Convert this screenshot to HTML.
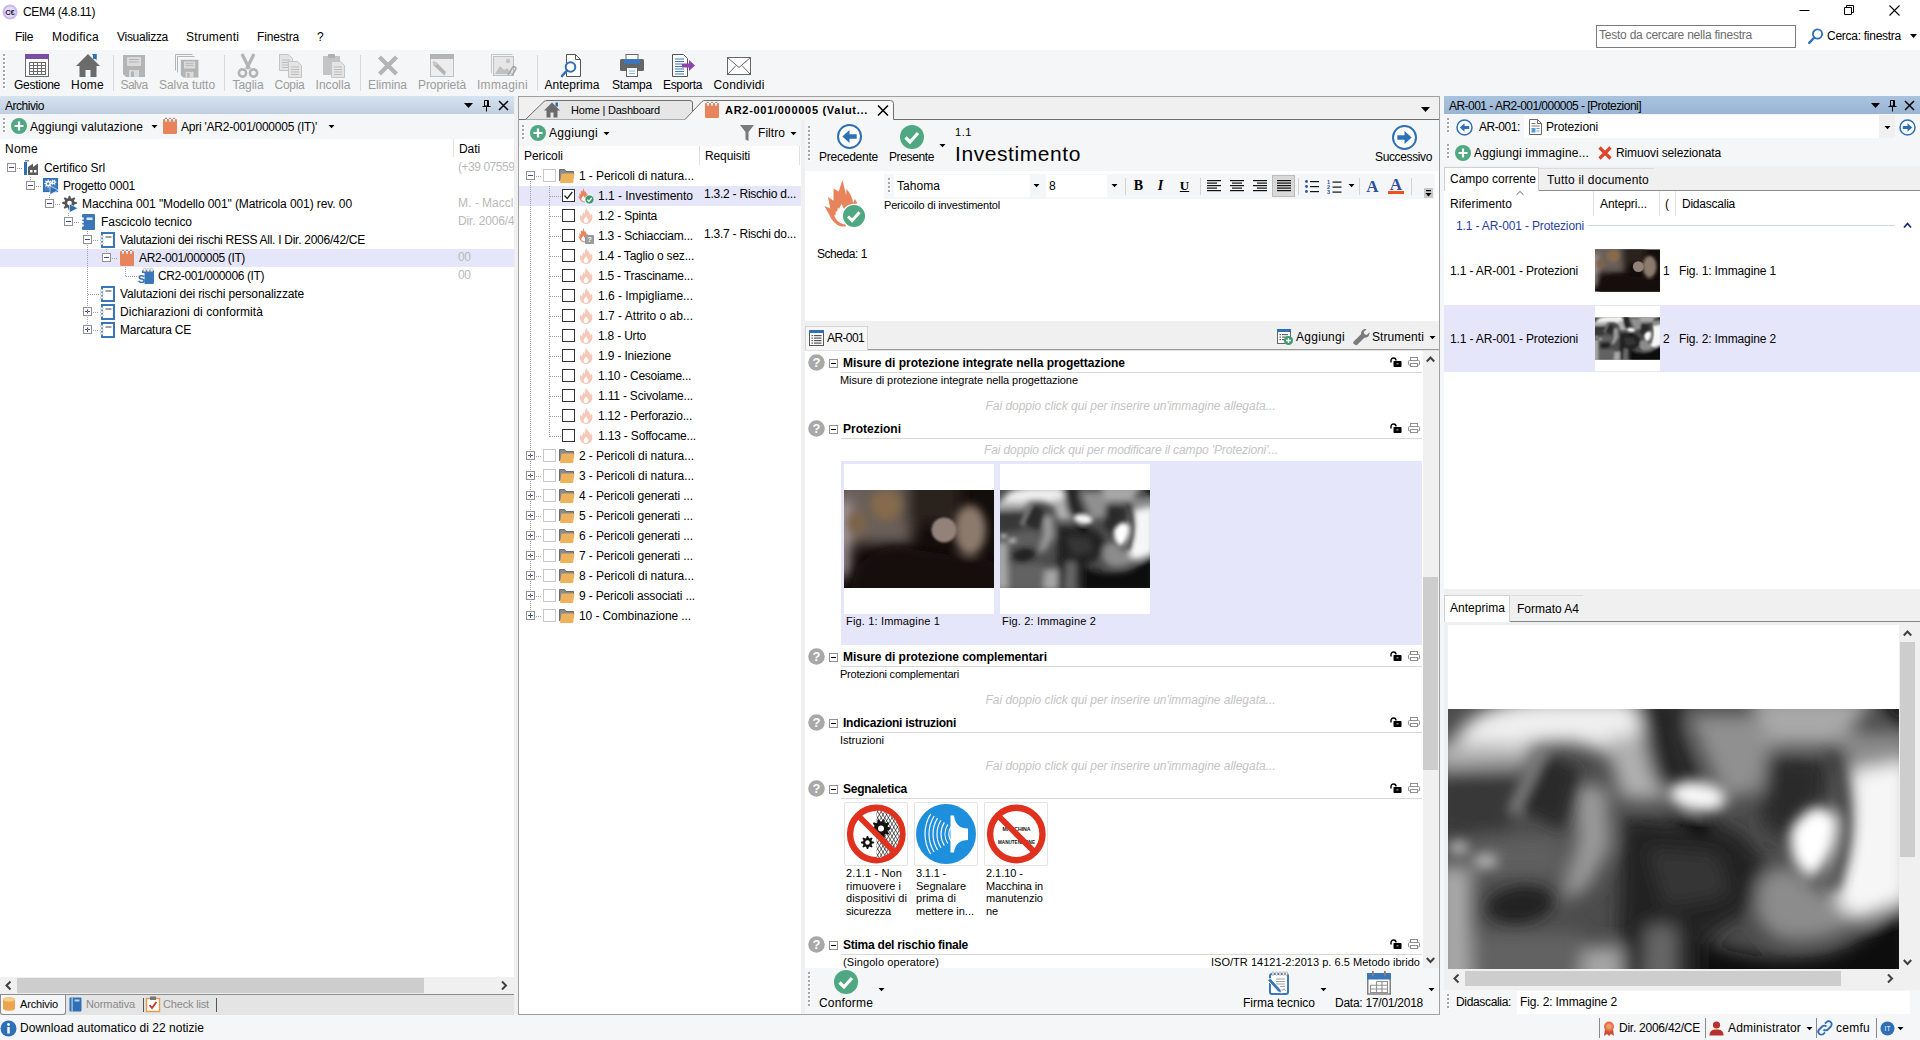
<!DOCTYPE html>
<html><head><meta charset="utf-8"><title>CEM4</title>
<style>
html,body{margin:0;padding:0;}
body{width:1920px;height:1040px;overflow:hidden;position:relative;background:#f5f6f7;font-family:"Liberation Sans",sans-serif;font-size:12px;}
div,span,svg{position:absolute;}
svg{overflow:visible;}
</style></head><body>
<svg width="0" height="0" style="left:0;top:0"><defs>
<filter id="b2" x="-20%" y="-20%" width="140%" height="140%"><feGaussianBlur stdDeviation="2.2"/></filter>
<filter id="b3" x="-30%" y="-30%" width="160%" height="160%"><feGaussianBlur stdDeviation="3"/></filter>
<filter id="b4" x="-30%" y="-30%" width="160%" height="160%"><feGaussianBlur stdDeviation="4"/></filter>
<filter id="b1" x="-20%" y="-20%" width="140%" height="140%"><feGaussianBlur stdDeviation="1.1"/></filter>
<filter id="b7" x="-40%" y="-40%" width="180%" height="180%"><feGaussianBlur stdDeviation="7"/></filter>
<clipPath id="c150"><rect x="0" y="0" width="150" height="98"/></clipPath>
<g id="img1" clip-path="url(#c150)">
 <rect width="150" height="98" fill="#130d0b"/>
 <g filter="url(#b7)">
  <rect x="-10" y="-12" width="78" height="66" fill="#6a5e59"/>
  <rect x="-10" y="12" width="15" height="74" fill="#b3a5a5"/>
  <rect x="62" y="-10" width="55" height="44" fill="#2c221c"/>
 </g>
 <g filter="url(#b4)">
  <ellipse cx="42" cy="15" rx="15" ry="15" fill="#866a4c"/>
  <ellipse cx="13" cy="33" rx="10" ry="11" fill="#7a634a"/>
  <ellipse cx="126" cy="40" rx="16" ry="25" fill="#8c7a6d"/>
  <path d="M6 104L14 76Q40 50 72 60L156 72V104z" fill="#130d0b"/>
 </g>
 <circle cx="100" cy="40" r="12.500" fill="#93827a" filter="url(#b1)"/>
</g>
<g id="img2" clip-path="url(#c150)">
 <rect width="150" height="98" fill="#4c4c4c"/>
 <g filter="url(#b3)">
  <!-- top-left white band arc -->
  <path d="M2 11Q8 -3 35 -3H60Q68 6 71 26L60 22Q55 13 40 11L5 13z" fill="#efefef"/>
  <path d="M52 10L66 8L74 30L58 30z" fill="#b0b0b0"/>
  <!-- left gray band and dark below -->
  <path d="M-4 11L28 12L27 19L-4 20z" fill="#b4b4b4"/>
  <path d="M-4 21H24L20 42H-4z" fill="#383838"/>
  <!-- dark top center diagonal -->
  <path d="M62 -4H80L78 8L90 38L82 42L68 22z" fill="#282828"/>
  <!-- right of it gray -->
  <path d="M80 2H108L108 26L92 30z" fill="#909090"/>
  <path d="M100 -4H142L130 12L108 12z" fill="#a8a8a8"/>
  <path d="M130 8H154V24H134z" fill="#8c8c8c"/>
  <!-- dark vertical right -->
  <path d="M106 15L126 17L125 30L114 44L104 38z" fill="#2a2a2a"/>
  <!-- center dark mass -->
  <path d="M58 36L96 40L108 54L104 64L86 76L86 100H56z" fill="#222222"/>
  <path d="M66 46L90 48L94 62L72 66z" fill="#363636"/>
  <!-- light curve stripe -->
  <path d="M42 25L53 26L54 46L46 60L37 64L43 44z" fill="#9a9a9a"/>
  <!-- left mid -->
  <path d="M8 42H38V56H10z" fill="#5e5e5e"/>
  <path d="M-4 52H8V100H-4z" fill="#a8a8a8"/>
  <path d="M10 74H44V100H8z" fill="#626262"/>
  <path d="M45 79H58V100H43z" fill="#a6a6a6"/>
  <path d="M66 72H76V100H64z" fill="#686868"/>
  <!-- gray swoosh lower right -->
  <path d="M104 56Q112 50 118 55Q124 62 131 64L137 70Q124 79 110 76Q99 70 104 56z" fill="#8c8c8c"/>
  <!-- bottom right dark -->
  <path d="M84 77Q106 86 128 81Q142 75 154 60V102H84z" fill="#0e0e0e"/>
  <path d="M133 21L154 17V63L138 70Q126 66 129 56Q135 44 133 21z" fill="#f6f6f6"/>
 </g>
 <g filter="url(#b2)">
  <path d="M31 13L33.500 14L23 35L20.500 34z" fill="#a8a8a8"/>
  <path d="M32 15L44 20L38 40L23 33z" fill="#2c2c2c"/>
  <ellipse cx="24" cy="65" rx="11" ry="6" fill="#222" transform="rotate(-8 24 65)"/>
  <ellipse cx="83" cy="29" rx="9.500" ry="5" fill="#f6f6f6" transform="rotate(8 83 29)"/>
  <path d="M77 34L87 39.500L85.500 41.500L76 36.500z" fill="#060606"/>
  <path d="M114 40Q122 28 129 36Q130 48 121 56Q113 52 114 40z" fill="#ffffff"/>
  <path d="M127 15Q136 36 128 60" fill="none" stroke="#3a3a3a" stroke-width="3.500"/>
  <path d="M143 -3H152V6z" fill="#0c0c0c"/>
  <ellipse cx="3.500" cy="46" rx="3.500" ry="2" fill="#cfcfcf"/>
  <ellipse cx="12.500" cy="50.500" rx="4" ry="2" fill="#cfcfcf"/>
 </g>
</g>
</defs></svg>
<div style="left:0px;top:0px;width:1920px;height:50px;background:#fff;"></div>
<svg style="left:2px;top:4px;" width="16" height="16" viewBox="0 0 16 16"><circle cx="8" cy="8" r="7.5" fill="#c9b8ec"/><circle cx="8" cy="8" r="5.5" fill="#e2d9f5"/><text x="8" y="11" font-size="7.5" font-weight="700" text-anchor="middle" fill="#2a2440" font-family="Liberation Sans">C€</text></svg>
<span id="t1" style="top:4.0px;font-size:12px;line-height:16px;color:#000;white-space:nowrap;letter-spacing:-0.395px;left:23px;">CEM4 (4.8.11)</span>
<svg style="left:1794px;top:0px;" width="120" height="24" viewBox="0 0 120 24"><path d="M5.5 10.5h10" stroke="#000" stroke-width="1" fill="none"/><path d="M50.5 7.5h7v7h-7z M52.5 7.5v-2h7v7h-2" stroke="#000" stroke-width="1" fill="none"/><path d="M95.5 5.5l10 10M105.5 5.5l-10 10" stroke="#000" stroke-width="1.1" fill="none"/></svg>
<span id="t2" style="top:29.0px;font-size:12px;line-height:16px;color:#000;white-space:nowrap;letter-spacing:-0.336px;left:15px;">File</span>
<span id="t3" style="top:29.0px;font-size:12px;line-height:16px;color:#000;white-space:nowrap;letter-spacing:0.289px;left:52px;">Modifica</span>
<span id="t4" style="top:29.0px;font-size:12px;line-height:16px;color:#000;white-space:nowrap;letter-spacing:-0.281px;left:117px;">Visualizza</span>
<span id="t5" style="top:29.0px;font-size:12px;line-height:16px;color:#000;white-space:nowrap;letter-spacing:0.182px;left:186px;">Strumenti</span>
<span id="t6" style="top:29.0px;font-size:12px;line-height:16px;color:#000;white-space:nowrap;letter-spacing:-0.170px;left:257px;">Finestra</span>
<span id="t7" style="top:29.0px;font-size:12px;line-height:16px;color:#000;white-space:nowrap;letter-spacing:-0.688px;left:317px;">?</span>
<div style="left:1596px;top:25px;width:200px;height:23px;background:#fff;border:1px solid #7a7a7a;box-sizing:border-box;"></div>
<span id="t8" style="top:27.0px;font-size:12px;line-height:16px;color:#6d6d6d;white-space:nowrap;letter-spacing:-0.229px;left:1599px;">Testo da cercare nella finestra</span>
<svg style="left:1807px;top:27px;" width="18" height="18" viewBox="0 0 18 18"><circle cx="10.5" cy="7" r="4.6" fill="none" stroke="#2f6fb5" stroke-width="1.8"/><path d="M7.3 10.5L2.2 15.8" stroke="#2f6fb5" stroke-width="2.4" stroke-linecap="round"/></svg>
<span id="t9" style="top:28.0px;font-size:12px;line-height:16px;color:#000;white-space:nowrap;letter-spacing:-0.269px;left:1827px;">Cerca: finestra</span>
<svg style="left:1910px;top:34px;" width="8" height="5" viewBox="0 0 8 5"><path d="M0 0h7l-3.5 4z" fill="#000"/></svg>
<div style="left:0px;top:50px;width:1920px;height:46px;background:#f5f6f7;"></div>
<svg style="left:3px;top:54px;" width="3" height="38" viewBox="0 0 3 38"><rect x="1" y="1" width="2" height="2" fill="#fff"/><rect x="0" y="0" width="2" height="2" fill="#a6a6a6"/><rect x="1" y="5" width="2" height="2" fill="#fff"/><rect x="0" y="4" width="2" height="2" fill="#a6a6a6"/><rect x="1" y="9" width="2" height="2" fill="#fff"/><rect x="0" y="8" width="2" height="2" fill="#a6a6a6"/><rect x="1" y="13" width="2" height="2" fill="#fff"/><rect x="0" y="12" width="2" height="2" fill="#a6a6a6"/><rect x="1" y="17" width="2" height="2" fill="#fff"/><rect x="0" y="16" width="2" height="2" fill="#a6a6a6"/><rect x="1" y="21" width="2" height="2" fill="#fff"/><rect x="0" y="20" width="2" height="2" fill="#a6a6a6"/><rect x="1" y="25" width="2" height="2" fill="#fff"/><rect x="0" y="24" width="2" height="2" fill="#a6a6a6"/><rect x="1" y="29" width="2" height="2" fill="#fff"/><rect x="0" y="28" width="2" height="2" fill="#a6a6a6"/><rect x="1" y="33" width="2" height="2" fill="#fff"/><rect x="0" y="32" width="2" height="2" fill="#a6a6a6"/></svg>
<svg style="left:25px;top:54px;" width="24" height="24" viewBox="0 0 24 24"><rect x="0.5" y="0.5" width="23" height="22" fill="#fff" stroke="#6a6a6a"/><rect x="0" y="0" width="24" height="5" fill="#7b4ea3"/><path d="M4.5 8v12" stroke="#6a6a6a"/><path d="M8.5 8v12" stroke="#6a6a6a"/><path d="M12.5 8v12" stroke="#6a6a6a"/><path d="M16.5 8v12" stroke="#6a6a6a"/><path d="M20.5 8v12" stroke="#6a6a6a"/><path d="M4 8.5h17" stroke="#6a6a6a"/><path d="M4 11.5h17" stroke="#6a6a6a"/><path d="M4 14.5h17" stroke="#6a6a6a"/><path d="M4 17.5h17" stroke="#6a6a6a"/><path d="M4 20.5h17" stroke="#6a6a6a"/></svg>
<span id="t10" style="top:77.0px;font-size:12px;line-height:16px;color:#000;white-space:nowrap;letter-spacing:-0.254px;left:14.00px;">Gestione</span>
<svg style="left:75.5px;top:54px;" width="24" height="24" viewBox="0 0 24 24"><path d="M12 0L0 12h3.5v11h6v-7h5v7h6V12H24z" fill="#6b6b6b"/><path d="M16 0h4.5v6.5z" fill="#2f6fb5"/><rect x="17" y="0" width="3.5" height="5" fill="#2f6fb5"/></svg>
<span id="t11" style="top:77.0px;font-size:12px;line-height:16px;color:#000;white-space:nowrap;letter-spacing:0.246px;left:71.00px;">Home</span>
<div style="left:113px;top:55px;width:1px;height:36px;background:#d9d9d9;"></div>
<svg style="left:122px;top:54px;" width="24" height="24" viewBox="0 0 24 24"><path d="M1 1h22v22H4l-3-3z" fill="#b4b4b4"/><rect x="5" y="3" width="14" height="9" fill="#dadada"/><path d="M7 5.5h10M7 8h10" stroke="#b4b4b4"/><rect x="7" y="16" width="10" height="7" fill="#dadada"/><rect x="9" y="17.5" width="3" height="5.5" fill="#b4b4b4"/></svg>
<span id="t12" style="top:77.0px;font-size:12px;line-height:16px;color:#9c9c9c;white-space:nowrap;letter-spacing:-0.606px;left:120.50px;">Salva</span>
<svg style="left:175px;top:54px;" width="24" height="24" viewBox="0 0 24 24"><path d="M0.5 0.5h17M0.5 0.5v16M2.5 2.5h17M2.5 2.5v16" stroke="#b4b4b4" fill="none"/><g transform="translate(5,5) scale(0.8)"><path d="M1 1h22v22H4l-3-3z" fill="#b4b4b4"/><rect x="5" y="3" width="14" height="9" fill="#dadada"/><path d="M7 5.5h10M7 8h10" stroke="#b4b4b4"/><rect x="7" y="16" width="10" height="7" fill="#dadada"/><rect x="9" y="17.5" width="3" height="5.5" fill="#b4b4b4"/></g></svg>
<span id="t13" style="top:77.0px;font-size:12px;line-height:16px;color:#9c9c9c;white-space:nowrap;letter-spacing:-0.064px;left:159.00px;">Salva tutto</span>
<div style="left:224px;top:55px;width:1px;height:36px;background:#d9d9d9;"></div>
<svg style="left:236px;top:54px;" width="24" height="24" viewBox="0 0 24 24"><path d="M6 0l7.5 15M18 0l-7.5 15" stroke="#b4b4b4" stroke-width="3.2" fill="none"/><circle cx="6.5" cy="19" r="3.6" fill="none" stroke="#b4b4b4" stroke-width="2.6"/><circle cx="17.5" cy="19" r="3.6" fill="none" stroke="#b4b4b4" stroke-width="2.6"/></svg>
<span id="t14" style="top:77.0px;font-size:12px;line-height:16px;color:#9c9c9c;white-space:nowrap;letter-spacing:-0.060px;left:232.50px;">Taglia</span>
<svg style="left:277.5px;top:54px;" width="24" height="24" viewBox="0 0 24 24"><g transform="translate(1,0)"><path d="M0.5 0.5h9l4 4v12h-13z" fill="#e4e4e4" stroke="#c4c4c4"/><path d="M3 6h8M3 8.500h8M3 11h8M3 13.500h8" stroke="#bdbdbd"/></g><g transform="translate(10,7)"><path d="M0.5 0.5h9l4 4v12h-13z" fill="#e4e4e4" stroke="#c4c4c4"/><path d="M3 6h8M3 8.500h8M3 11h8M3 13.500h8" stroke="#bdbdbd"/></g></svg>
<span id="t15" style="top:77.0px;font-size:12px;line-height:16px;color:#9c9c9c;white-space:nowrap;letter-spacing:-0.272px;left:274.50px;">Copia</span>
<svg style="left:321px;top:54px;" width="24" height="24" viewBox="0 0 24 24"><rect x="2" y="2" width="17" height="19" fill="#c4c4c4"/><rect x="7" y="0" width="7" height="4" rx="1" fill="#b0b0b0"/><g transform="translate(10,7)"><path d="M0.5 0.5h9l4 4v12h-13z" fill="#e4e4e4" stroke="#c4c4c4"/><path d="M3 6h8M3 8.500h8M3 11h8M3 13.500h8" stroke="#bdbdbd"/></g></svg>
<span id="t16" style="top:77.0px;font-size:12px;line-height:16px;color:#9c9c9c;white-space:nowrap;letter-spacing:0.045px;left:315.50px;">Incolla</span>
<div style="left:360px;top:55px;width:1px;height:36px;background:#d9d9d9;"></div>
<svg style="left:375.5px;top:54px;" width="24" height="24" viewBox="0 0 24 24"><path d="M3.5 3l17 17M20.500 3l-17 17" stroke="#b4b4b4" stroke-width="4.2" fill="none"/></svg>
<span id="t17" style="top:77.0px;font-size:12px;line-height:16px;color:#9c9c9c;white-space:nowrap;letter-spacing:-0.051px;left:368.00px;">Elimina</span>
<svg style="left:430px;top:54px;" width="24" height="24" viewBox="0 0 24 24"><rect x="0.5" y="0.5" width="23" height="22" fill="#ededed" stroke="#c0c0c0"/><rect x="0" y="0" width="24" height="5" fill="#b4b4b4"/><path d="M3 11l3-3 10 10-1.500 3.500z" fill="#b4b4b4"/><path d="M2 8.500l2.500-1.500 3 3-2 2z" fill="#c8c8c8"/></svg>
<span id="t18" style="top:77.0px;font-size:12px;line-height:16px;color:#9c9c9c;white-space:nowrap;letter-spacing:-0.078px;left:418.00px;">Proprietà</span>
<svg style="left:490.5px;top:54px;" width="24" height="24" viewBox="0 0 24 24"><path d="M0.5 0.5h21" stroke="#c4c4c4"/><path d="M0.500 0.500v19" stroke="#c4c4c4"/><rect x="2.500" y="2.500" width="20" height="19" fill="#e6e6e6" stroke="#c0c0c0"/><circle cx="17" cy="7" r="2.200" fill="#c4c4c4"/><path d="M4 20l5-8 4 4 3-2 5 6z" fill="#c0c0c0"/><path d="M17 21l4.500-7.500a1.800 1.800 0 013 2l-3.500 6" stroke="#a8a8a8" stroke-width="1.600" fill="none"/></svg>
<span id="t19" style="top:77.0px;font-size:12px;line-height:16px;color:#9c9c9c;white-space:nowrap;letter-spacing:0.289px;left:477.00px;">Immagini</span>
<div style="left:537px;top:55px;width:1px;height:36px;background:#d9d9d9;"></div>
<svg style="left:560px;top:54px;" width="24" height="24" viewBox="0 0 24 24"><path d="M6.500 0.500h9l5 5v17h-14z" fill="#fff" stroke="#555"/><path d="M15.500 0.500v5h5" fill="none" stroke="#555"/><circle cx="10.500" cy="13" r="4.800" fill="#fff" stroke="#2f6fb5" stroke-width="2"/><path d="M7 16.500l-5 5.500" stroke="#2f6fb5" stroke-width="2.600" stroke-linecap="round"/></svg>
<span id="t20" style="top:77.0px;font-size:12px;line-height:16px;color:#000;white-space:nowrap;letter-spacing:0.033px;left:544.50px;">Anteprima</span>
<svg style="left:620px;top:54px;" width="24" height="24" viewBox="0 0 24 24"><rect x="6" y="0.500" width="12" height="6" fill="#fff" stroke="#666"/><rect x="0" y="5" width="24" height="12" rx="1.500" fill="#666"/><rect x="4" y="5" width="16" height="5" fill="#3b76b8"/><rect x="6.500" y="13.500" width="11" height="9" fill="#fff" stroke="#666"/><path d="M9 17h6M9 19.500h6" stroke="#7ab0e0"/></svg>
<span id="t21" style="top:77.0px;font-size:12px;line-height:16px;color:#000;white-space:nowrap;letter-spacing:-0.227px;left:612.00px;">Stampa</span>
<svg style="left:670.5px;top:54px;" width="24" height="24" viewBox="0 0 24 24"><path d="M1.500 0.500h11l4 4v18h-15z" fill="#fff" stroke="#555"/><path d="M4 5h9M4 7.500h9M4 10h7M4 12.500h7M4 15h9M4 17.500h9M4 20h9" stroke="#3b76b8"/><path d="M11 9.500h7v-3.500l6 5.500-6 5.500v-3.500h-7z" fill="#8b44ac"/></svg>
<span id="t22" style="top:77.0px;font-size:12px;line-height:16px;color:#000;white-space:nowrap;letter-spacing:-0.337px;left:663.00px;">Esporta</span>
<svg style="left:727px;top:54px;" width="24" height="24" viewBox="0 0 24 24"><rect x="0.500" y="3.500" width="23" height="17" fill="#fff" stroke="#666"/><path d="M0.500 3.500l11.500 10 11.500-10M0.500 20.500l8.500-9M23.500 20.500l-8.500-9" fill="none" stroke="#666"/></svg>
<span id="t23" style="top:77.0px;font-size:12px;line-height:16px;color:#000;white-space:nowrap;letter-spacing:0.182px;left:713.50px;">Condividi</span>
<div style="left:0px;top:1014px;width:1920px;height:26px;background:#f5f6f7;"></div>
<svg style="left:0px;top:1020px;" width="17" height="17" viewBox="0 0 17 17"><circle cx="8.500" cy="8.500" r="8" fill="#2f6fb5"/><rect x="7.300" y="7" width="2.400" height="6.500" fill="#fff"/><circle cx="8.500" cy="4.500" r="1.400" fill="#fff"/></svg>
<span id="t24" style="top:1020.0px;font-size:12px;line-height:16px;color:#000;white-space:nowrap;letter-spacing:0.037px;left:20px;">Download automatico di 22 notizie</span>
<div style="left:1599px;top:1018px;width:1px;height:20px;background:#8a8a8a;"></div>
<svg style="left:1602px;top:1021px;" width="14" height="15" viewBox="0 0 14 15"><path d="M3 8l-1 7 3-2 2 2 2-2 3 2-1-7z" fill="#c94f3a"/><circle cx="7" cy="5.500" r="5" fill="#e8704a"/><circle cx="7" cy="5.500" r="2.800" fill="#f19a6e"/></svg>
<span id="t25" style="top:1020.0px;font-size:12px;line-height:16px;color:#000;white-space:nowrap;letter-spacing:-0.248px;left:1619px;">Dir. 2006/42/CE</span>
<div style="left:1705px;top:1018px;width:1px;height:20px;background:#8a8a8a;"></div>
<svg style="left:1709px;top:1021px;" width="15" height="15" viewBox="0 0 15 15"><circle cx="7.500" cy="4" r="3.600" fill="#b5322c"/><path d="M0.500 14.500c0-5 3-6 7-6s7 1 7 6z" fill="#b5322c"/></svg>
<span id="t26" style="top:1020.0px;font-size:12px;line-height:16px;color:#000;white-space:nowrap;letter-spacing:0.178px;left:1728px;">Administrator</span>
<svg style="left:1806px;top:1027px;" width="7" height="4" viewBox="0 0 7 4"><path d="M0.500 0h6l-3 3.300z" fill="#000"/></svg>
<div style="left:1816px;top:1018px;width:1px;height:20px;background:#8a8a8a;"></div>
<svg style="left:1817px;top:1020px;" width="16" height="16" viewBox="0 0 16 16"><path d="M6.500 9.500a3 3 0 004.300 0l3-3a3 3 0 00-4.300-4.300l-1.500 1.500M9.500 6.500a3 3 0 00-4.300 0l-3 3a3 3 0 004.300 4.300l1.500-1.500" fill="none" stroke="#2f6fb5" stroke-width="1.800"/></svg>
<span id="t27" style="top:1020.0px;font-size:12px;line-height:16px;color:#000;white-space:nowrap;letter-spacing:0.263px;left:1836px;">cemfu</span>
<div style="left:1876px;top:1018px;width:1px;height:20px;background:#8a8a8a;"></div>
<svg style="left:1880px;top:1021px;" width="15" height="15" viewBox="0 0 15 15"><circle cx="7.500" cy="7.500" r="7" fill="#2f6fb5"/><text x="7.500" y="10" font-size="6.500" fill="#fff" text-anchor="middle" font-family="Liberation Sans">IT</text></svg>
<svg style="left:1897px;top:1027px;" width="7" height="4" viewBox="0 0 7 4"><path d="M0.500 0h6l-3 3.300z" fill="#000"/></svg>
<div style="left:0px;top:96px;width:514px;height:899px;background:#fff;"></div>
<div style="left:0px;top:96px;width:514px;height:18px;background:linear-gradient(#d6e3f1,#c0cedf);"></div>
<span id="t28" style="top:97.5px;font-size:12px;line-height:16px;color:#000;white-space:nowrap;letter-spacing:-0.461px;left:5px;">Archivio</span>
<svg style="left:464px;top:103px;" width="9" height="5" viewBox="0 0 9 5"><path d="M0 0h9l-4.500 5z" fill="#000"/></svg>
<svg style="left:482px;top:100px;" width="9" height="12" viewBox="0 0 9 12"><path d="M2.500 0.500h4v5.500h-4zM5.500 0.500v5.500M0.500 6.500h8M4.500 6.500v5" stroke="#000" fill="none"/></svg>
<svg style="left:498px;top:100px;" width="11" height="11" viewBox="0 0 11 11"><path d="M1 1l9 9M10 1l-9 9" stroke="#000" stroke-width="1.500"/></svg>
<div style="left:0px;top:114px;width:514px;height:25px;background:#f5f6f7;"></div>
<svg style="left:3px;top:118px;" width="3" height="18" viewBox="0 0 3 18"><rect x="1" y="1" width="2" height="2" fill="#fff"/><rect x="0" y="0" width="2" height="2" fill="#a6a6a6"/><rect x="1" y="5" width="2" height="2" fill="#fff"/><rect x="0" y="4" width="2" height="2" fill="#a6a6a6"/><rect x="1" y="9" width="2" height="2" fill="#fff"/><rect x="0" y="8" width="2" height="2" fill="#a6a6a6"/><rect x="1" y="13" width="2" height="2" fill="#fff"/><rect x="0" y="12" width="2" height="2" fill="#a6a6a6"/></svg>
<svg style="left:11px;top:118px;" width="16" height="16" viewBox="0 0 16 16"><circle cx="8" cy="8" r="8" fill="#4fa882"/><path d="M8 3.500v9M3.500 8h9" stroke="#fff" stroke-width="2.200"/></svg>
<span id="t29" style="top:118.5px;font-size:12px;line-height:16px;color:#000;white-space:nowrap;letter-spacing:0.113px;left:30px;">Aggiungi valutazione</span>
<svg style="left:151px;top:125px;" width="7" height="4" viewBox="0 0 7 4"><path d="M0.500 0h6l-3 3.300z" fill="#000"/></svg>
<svg style="left:163px;top:118px;" width="14" height="16" viewBox="0 0 14 16"><rect x="0" y="1" width="14" height="15" rx="1.200" fill="#e8845c"/><rect x="2" y="0" width="2" height="3.800" fill="#fff"/><rect x="2" y="2.400" width="2" height="1.400" fill="#b5cfe0"/><rect x="2" y="-0.300" width="2" height="1" rx="0.500" fill="#6e6e6e"/><rect x="6" y="0" width="2" height="3.800" fill="#fff"/><rect x="6" y="2.400" width="2" height="1.400" fill="#b5cfe0"/><rect x="6" y="-0.300" width="2" height="1" rx="0.500" fill="#6e6e6e"/><rect x="10" y="0" width="2" height="3.800" fill="#fff"/><rect x="10" y="2.400" width="2" height="1.400" fill="#b5cfe0"/><rect x="10" y="-0.300" width="2" height="1" rx="0.500" fill="#6e6e6e"/></svg>
<span id="t30" style="top:118.5px;font-size:12px;line-height:16px;color:#000;white-space:nowrap;letter-spacing:-0.230px;left:181px;">Apri 'AR2-001/000005 (IT)'</span>
<svg style="left:328px;top:125px;" width="7" height="4" viewBox="0 0 7 4"><path d="M0.500 0h6l-3 3.300z" fill="#000"/></svg>
<span id="t31" style="top:140.5px;font-size:12px;line-height:16px;color:#000;white-space:nowrap;letter-spacing:0.246px;left:5px;">Nome</span>
<div style="left:453px;top:139px;width:1px;height:18px;background:#e0e0e0;"></div>
<span id="t32" style="top:140.5px;font-size:12px;line-height:16px;color:#000;white-space:nowrap;letter-spacing:-0.086px;left:459px;">Dati</span>
<div style="left:0px;top:249px;width:514px;height:18px;background:#e6e6fa;"></div>
<div style="left:17px;top:168px;width:6px;height:1px;background:repeating-linear-gradient(90deg,#a0a0a0 0 1px,transparent 1px 2px);"></div>
<svg style="left:7px;top:162.5px;" width="9" height="9" viewBox="0 0 9 9"><rect x="0.500" y="0.500" width="8" height="8" fill="#fff" stroke="#919191"/><path d="M2 4.500h5" stroke="#3a4e8c"/></svg>
<svg style="left:24px;top:160px;" width="16" height="16" viewBox="0 0 16 16"><rect x="0" y="2" width="3" height="13" fill="#2f6fb5"/><path d="M1 0h4v1.500h-4z" fill="#888"/><path d="M4 15V7l5-3.500v3.500l5-3.500V15z" fill="#5a5a5a"/><rect x="6" y="10" width="2.500" height="2.500" fill="#fff"/><rect x="10" y="10" width="2.500" height="2.500" fill="#fff"/></svg>
<span id="t33" style="top:159.5px;font-size:12px;line-height:16px;color:#000;white-space:nowrap;letter-spacing:-0.078px;left:44px;">Certifico Srl</span>
<span id="t34" style="top:158.5px;font-size:12px;line-height:16px;color:#b9b9b9;white-space:nowrap;letter-spacing:-0.456px;left:458px;">(+39 07559</span>
<div style="left:36px;top:186px;width:6px;height:1px;background:repeating-linear-gradient(90deg,#a0a0a0 0 1px,transparent 1px 2px);"></div>
<svg style="left:26px;top:180.5px;" width="9" height="9" viewBox="0 0 9 9"><rect x="0.500" y="0.500" width="8" height="8" fill="#fff" stroke="#919191"/><path d="M2 4.500h5" stroke="#3a4e8c"/></svg>
<svg style="left:43px;top:178px;" width="16" height="16" viewBox="0 0 16 16"><rect x="0.800" y="0.800" width="13.500" height="12.500" fill="#4a82c0" stroke="#2f6fb5" stroke-width="1.600"/><path d="M9.18 5.21 L9.18 5.99 L7.69 6.35 L7.49 6.83 L8.29 8.14 L7.74 8.69 L6.43 7.89 L5.95 8.09 L5.59 9.58 L4.81 9.58 L4.45 8.09 L3.97 7.89 L2.66 8.69 L2.11 8.14 L2.91 6.83 L2.71 6.35 L1.22 5.99 L1.22 5.21 L2.71 4.85 L2.91 4.37 L2.11 3.06 L2.66 2.51 L3.97 3.31 L4.45 3.11 L4.81 1.62 L5.59 1.62 L5.95 3.11 L6.43 3.31 L7.74 2.51 L8.29 3.06 L7.49 4.37 L7.69 4.85z" fill="#fff"/><circle cx="5.2" cy="5.6" r="1.2" fill="#4a82c0"/><path d="M13.38 3.83 L13.38 4.57 L12.26 4.89 L12.03 5.30 L12.30 6.42 L11.67 6.79 L10.83 5.98 L10.37 5.98 L9.53 6.79 L8.90 6.42 L9.17 5.30 L8.94 4.89 L7.82 4.57 L7.82 3.83 L8.94 3.51 L9.17 3.10 L8.90 1.98 L9.53 1.61 L10.37 2.42 L10.83 2.42 L11.67 1.61 L12.30 1.98 L12.03 3.10 L12.26 3.51z" fill="#fff"/><circle cx="10.6" cy="4.2" r="0.8" fill="#4a82c0"/><path d="M7 8l8.500 4.200-8.500 4.300z" fill="#2f6fb5" stroke="#fff" stroke-width="0.600"/></svg>
<span id="t35" style="top:177.5px;font-size:12px;line-height:16px;color:#000;white-space:nowrap;letter-spacing:-0.262px;left:63px;">Progetto 0001</span>
<div style="left:55px;top:204px;width:6px;height:1px;background:repeating-linear-gradient(90deg,#a0a0a0 0 1px,transparent 1px 2px);"></div>
<svg style="left:45px;top:198.5px;" width="9" height="9" viewBox="0 0 9 9"><rect x="0.500" y="0.500" width="8" height="8" fill="#fff" stroke="#919191"/><path d="M2 4.500h5" stroke="#3a4e8c"/></svg>
<svg style="left:62px;top:196px;" width="16" height="16" viewBox="0 0 16 16"><path d="M14.86 6.27 L14.86 7.73 L12.28 8.45 L11.91 9.36 L13.22 11.69 L12.19 12.72 L9.86 11.41 L8.95 11.78 L8.23 14.36 L6.77 14.36 L6.05 11.78 L5.14 11.41 L2.81 12.72 L1.78 11.69 L3.09 9.36 L2.72 8.45 L0.14 7.73 L0.14 6.27 L2.72 5.55 L3.09 4.64 L1.78 2.31 L2.81 1.28 L5.14 2.59 L6.05 2.22 L6.77 -0.36 L8.23 -0.36 L8.95 2.22 L9.86 2.59 L12.19 1.28 L13.22 2.31 L11.91 4.64 L12.28 5.55z" fill="#555"/><circle cx="7.5" cy="7" r="2.3" fill="#fff"/><path d="M7.500 8l8.500 4.200-8.500 4.300z" fill="#2f6fb5" stroke="#fff" stroke-width="0.600"/></svg>
<span id="t36" style="top:195.5px;font-size:12px;line-height:16px;color:#000;white-space:nowrap;letter-spacing:-0.089px;left:82px;">Macchina 001 "Modello 001" (Matricola 001) rev. 00</span>
<span id="t37" style="top:194.5px;font-size:12px;line-height:16px;color:#b9b9b9;white-space:nowrap;letter-spacing:0.016px;left:458px;">M. - Maccl</span>
<div style="left:74px;top:222px;width:6px;height:1px;background:repeating-linear-gradient(90deg,#a0a0a0 0 1px,transparent 1px 2px);"></div>
<svg style="left:64px;top:216.5px;" width="9" height="9" viewBox="0 0 9 9"><rect x="0.500" y="0.500" width="8" height="8" fill="#fff" stroke="#919191"/><path d="M2 4.500h5" stroke="#3a4e8c"/></svg>
<svg style="left:81px;top:214px;" width="16" height="16" viewBox="0 0 16 16"><rect x="1" y="0" width="13" height="16" rx="1" fill="#3b76b8"/><rect x="5.500" y="3.500" width="6" height="2.500" fill="#dfe9f5"/><circle cx="1.500" cy="4.500" r="1.300" fill="#fff"/><circle cx="1.500" cy="8" r="1.300" fill="#fff"/><circle cx="1.500" cy="11.500" r="1.300" fill="#fff"/></svg>
<span id="t38" style="top:213.5px;font-size:12px;line-height:16px;color:#000;white-space:nowrap;letter-spacing:-0.062px;left:101px;">Fascicolo tecnico</span>
<span id="t39" style="top:212.5px;font-size:12px;line-height:16px;color:#b9b9b9;white-space:nowrap;letter-spacing:-0.141px;left:458px;">Dir. 2006/4</span>
<div style="left:93px;top:240px;width:6px;height:1px;background:repeating-linear-gradient(90deg,#a0a0a0 0 1px,transparent 1px 2px);"></div>
<svg style="left:83px;top:234.5px;" width="9" height="9" viewBox="0 0 9 9"><rect x="0.500" y="0.500" width="8" height="8" fill="#fff" stroke="#919191"/><path d="M2 4.500h5" stroke="#3a4e8c"/></svg>
<svg style="left:100px;top:232px;" width="16" height="16" viewBox="0 0 16 16"><rect x="2" y="1" width="12" height="14" fill="#fff" stroke="#3b76b8" stroke-width="2"/><path d="M5.500 5h6" stroke="#8a8a8a" stroke-width="1.600"/><circle cx="1.800" cy="4.500" r="1.300" fill="#fff" stroke="#9ab" stroke-width="0.600"/><circle cx="1.800" cy="8" r="1.300" fill="#fff" stroke="#9ab" stroke-width="0.600"/><circle cx="1.800" cy="11.500" r="1.300" fill="#fff" stroke="#9ab" stroke-width="0.600"/></svg>
<span id="t40" style="top:231.5px;font-size:12px;line-height:16px;color:#000;white-space:nowrap;letter-spacing:-0.272px;left:120px;">Valutazioni dei rischi RESS All. I Dir. 2006/42/CE</span>
<div style="left:112px;top:258px;width:6px;height:1px;background:repeating-linear-gradient(90deg,#a0a0a0 0 1px,transparent 1px 2px);"></div>
<svg style="left:102px;top:252.5px;" width="9" height="9" viewBox="0 0 9 9"><rect x="0.500" y="0.500" width="8" height="8" fill="#fff" stroke="#919191"/><path d="M2 4.500h5" stroke="#3a4e8c"/></svg>
<svg style="left:119px;top:250px;" width="16" height="16" viewBox="0 0 16 16"><g transform="translate(1,0)"><rect x="0" y="1" width="14" height="15" rx="1.200" fill="#e8845c"/><rect x="2" y="0" width="2" height="3.800" fill="#fff"/><rect x="2" y="2.400" width="2" height="1.400" fill="#b5cfe0"/><rect x="2" y="-0.300" width="2" height="1" rx="0.500" fill="#6e6e6e"/><rect x="6" y="0" width="2" height="3.800" fill="#fff"/><rect x="6" y="2.400" width="2" height="1.400" fill="#b5cfe0"/><rect x="6" y="-0.300" width="2" height="1" rx="0.500" fill="#6e6e6e"/><rect x="10" y="0" width="2" height="3.800" fill="#fff"/><rect x="10" y="2.400" width="2" height="1.400" fill="#b5cfe0"/><rect x="10" y="-0.300" width="2" height="1" rx="0.500" fill="#6e6e6e"/></g></svg>
<span id="t41" style="top:249.5px;font-size:12px;line-height:16px;color:#000;white-space:nowrap;letter-spacing:-0.354px;left:139px;">AR2-001/000005 (IT)</span>
<span id="t42" style="top:248.5px;font-size:12px;line-height:16px;color:#b9b9b9;white-space:nowrap;letter-spacing:-0.430px;left:458px;">00</span>
<div style="left:126px;top:276px;width:11px;height:1px;background:repeating-linear-gradient(90deg,#a0a0a0 0 1px,transparent 1px 2px);"></div>
<svg style="left:138px;top:268px;" width="16" height="16" viewBox="0 0 16 16"><rect x="4" y="2" width="12" height="14" rx="1.200" fill="#3b76b8"/><rect x="5.5" y="0.300" width="2.400" height="3.400" rx="1" fill="#f4f4f4" stroke="#a9a9a9" stroke-width="0.600"/><rect x="9" y="0.300" width="2.400" height="3.400" rx="1" fill="#f4f4f4" stroke="#a9a9a9" stroke-width="0.600"/><rect x="12.5" y="0.300" width="2.400" height="3.400" rx="1" fill="#f4f4f4" stroke="#a9a9a9" stroke-width="0.600"/><rect x="0.500" y="5" width="6" height="11" fill="#fff"/><text x="3.400" y="15" font-size="11" font-weight="700" fill="#2f6fb5" text-anchor="middle" font-family="Liberation Sans">S</text></svg>
<span id="t43" style="top:267.5px;font-size:12px;line-height:16px;color:#000;white-space:nowrap;letter-spacing:-0.389px;left:158px;">CR2-001/000006 (IT)</span>
<span id="t44" style="top:266.5px;font-size:12px;line-height:16px;color:#b9b9b9;white-space:nowrap;letter-spacing:-0.430px;left:458px;">00</span>
<div style="left:88px;top:294px;width:11px;height:1px;background:repeating-linear-gradient(90deg,#a0a0a0 0 1px,transparent 1px 2px);"></div>
<svg style="left:100px;top:286px;" width="16" height="16" viewBox="0 0 16 16"><rect x="2" y="1" width="12" height="14" fill="#fff" stroke="#3b76b8" stroke-width="2"/><path d="M5.500 5h6" stroke="#8a8a8a" stroke-width="1.600"/><circle cx="1.800" cy="4.500" r="1.300" fill="#fff" stroke="#9ab" stroke-width="0.600"/><circle cx="1.800" cy="8" r="1.300" fill="#fff" stroke="#9ab" stroke-width="0.600"/><circle cx="1.800" cy="11.500" r="1.300" fill="#fff" stroke="#9ab" stroke-width="0.600"/></svg>
<span id="t45" style="top:285.5px;font-size:12px;line-height:16px;color:#000;white-space:nowrap;letter-spacing:-0.141px;left:120px;">Valutazioni dei rischi personalizzate</span>
<div style="left:93px;top:312px;width:6px;height:1px;background:repeating-linear-gradient(90deg,#a0a0a0 0 1px,transparent 1px 2px);"></div>
<svg style="left:83px;top:306.5px;" width="9" height="9" viewBox="0 0 9 9"><rect x="0.500" y="0.500" width="8" height="8" fill="#fff" stroke="#919191"/><path d="M2 4.500h5" stroke="#3a4e8c"/><path d="M4.500 2v5" stroke="#3a4e8c"/></svg>
<svg style="left:100px;top:304px;" width="16" height="16" viewBox="0 0 16 16"><rect x="2" y="1" width="12" height="14" fill="#fff" stroke="#3b76b8" stroke-width="2"/><path d="M5.500 5h6" stroke="#8a8a8a" stroke-width="1.600"/><circle cx="1.800" cy="4.500" r="1.300" fill="#fff" stroke="#9ab" stroke-width="0.600"/><circle cx="1.800" cy="8" r="1.300" fill="#fff" stroke="#9ab" stroke-width="0.600"/><circle cx="1.800" cy="11.500" r="1.300" fill="#fff" stroke="#9ab" stroke-width="0.600"/></svg>
<span id="t46" style="top:303.5px;font-size:12px;line-height:16px;color:#000;white-space:nowrap;letter-spacing:0.084px;left:120px;">Dichiarazioni di conformità</span>
<div style="left:93px;top:330px;width:6px;height:1px;background:repeating-linear-gradient(90deg,#a0a0a0 0 1px,transparent 1px 2px);"></div>
<svg style="left:83px;top:324.5px;" width="9" height="9" viewBox="0 0 9 9"><rect x="0.500" y="0.500" width="8" height="8" fill="#fff" stroke="#919191"/><path d="M2 4.500h5" stroke="#3a4e8c"/><path d="M4.500 2v5" stroke="#3a4e8c"/></svg>
<svg style="left:100px;top:322px;" width="16" height="16" viewBox="0 0 16 16"><rect x="2" y="1" width="12" height="14" fill="#fff" stroke="#3b76b8" stroke-width="2"/><path d="M5.500 5h6" stroke="#8a8a8a" stroke-width="1.600"/><circle cx="1.800" cy="4.500" r="1.300" fill="#fff" stroke="#9ab" stroke-width="0.600"/><circle cx="1.800" cy="8" r="1.300" fill="#fff" stroke="#9ab" stroke-width="0.600"/><circle cx="1.800" cy="11.500" r="1.300" fill="#fff" stroke="#9ab" stroke-width="0.600"/></svg>
<span id="t47" style="top:321.5px;font-size:12px;line-height:16px;color:#000;white-space:nowrap;letter-spacing:-0.253px;left:120px;">Marcatura CE</span>
<div style="left:30px;top:177px;width:1px;height:4px;background:repeating-linear-gradient(180deg,#a0a0a0 0 1px,transparent 1px 2px);"></div>
<div style="left:49px;top:195px;width:1px;height:4px;background:repeating-linear-gradient(180deg,#a0a0a0 0 1px,transparent 1px 2px);"></div>
<div style="left:68px;top:213px;width:1px;height:4px;background:repeating-linear-gradient(180deg,#a0a0a0 0 1px,transparent 1px 2px);"></div>
<div style="left:87px;top:231px;width:1px;height:4px;background:repeating-linear-gradient(180deg,#a0a0a0 0 1px,transparent 1px 2px);"></div>
<div style="left:87px;top:245px;width:1px;height:86px;background:repeating-linear-gradient(180deg,#a0a0a0 0 1px,transparent 1px 2px);"></div>
<div style="left:106px;top:249px;width:1px;height:4px;background:repeating-linear-gradient(180deg,#a0a0a0 0 1px,transparent 1px 2px);"></div>
<div style="left:125px;top:267px;width:1px;height:10px;background:repeating-linear-gradient(180deg,#a0a0a0 0 1px,transparent 1px 2px);"></div>
<div style="left:514px;top:96px;width:4px;height:918px;background:#f0f0f0;"></div>
<div style="left:0px;top:977px;width:514px;height:17px;background:#f0f0f0;"></div>
<div style="left:17px;top:978px;width:407px;height:15px;background:#cdcdcd;"></div>
<svg style="left:5px;top:981px;" width="7" height="9" viewBox="0 0 7 9"><path d="M5.500 0.500l-4 4 4 4" fill="none" stroke="#404040" stroke-width="2"/></svg>
<svg style="left:501px;top:981px;" width="7" height="9" viewBox="0 0 7 9"><path d="M1 0.500l4 4-4 4" fill="none" stroke="#404040" stroke-width="2"/></svg>
<div style="left:0px;top:994px;width:514px;height:1px;background:#8c8c8c;"></div>
<div style="left:0px;top:995px;width:514px;height:20px;background:#e4e4e4;"></div>
<div style="left:0px;top:995px;width:66px;height:20px;background:#f5f6f7;border:1px solid #8c8c8c;border-top:none;border-radius:0 0 3px 3px;box-sizing:border-box;"></div>
<svg style="left:3px;top:997px;" width="12" height="14" viewBox="0 0 12 14"><path d="M0 2.500c0-3 12-3 12 0v9c0 3-12 3-12 0z" fill="#eba54e"/><ellipse cx="6" cy="2.500" rx="6" ry="2.200" fill="#f6cd8e"/></svg>
<span id="t48" style="top:996.5px;font-size:11px;line-height:15px;color:#000;white-space:nowrap;letter-spacing:-0.141px;left:20px;">Archivio</span>
<svg style="left:69px;top:997px;" width="13" height="15" viewBox="0 0 13 15"><rect x="0.500" y="0.500" width="12" height="14" rx="1" fill="#2f6fb5"/><rect x="2.500" y="0.500" width="1.200" height="14" fill="#bcd2ea"/><rect x="5.500" y="2.500" width="5" height="2" fill="#bcd2ea"/></svg>
<span id="t49" style="top:996.5px;font-size:11px;line-height:15px;color:#8a8a8a;white-space:nowrap;letter-spacing:-0.125px;left:86px;">Normativa</span>
<div style="left:143px;top:998px;width:1px;height:14px;background:#555;"></div>
<svg style="left:146px;top:996px;" width="14" height="16" viewBox="0 0 14 16"><rect x="0.500" y="2.500" width="13" height="13" fill="#fff" stroke="#e0a050" stroke-width="1.500"/><rect x="4" y="0.500" width="6" height="3.500" fill="#777"/><path d="M3.500 9l2.500 3 4.500-6" fill="none" stroke="#c0392b" stroke-width="1.800"/></svg>
<span id="t50" style="top:996.5px;font-size:11px;line-height:15px;color:#8a8a8a;white-space:nowrap;letter-spacing:-0.169px;left:163px;">Check list</span>
<div style="left:216px;top:998px;width:1px;height:14px;background:#555;"></div>
<div style="left:518px;top:96px;width:922px;height:919px;background:#f0f0f0;border:1px solid #a0a0a0;box-sizing:border-box;"></div>
<div style="left:519px;top:119px;width:920px;height:1px;background:#6e6e6e;"></div>
<svg style="left:519px;top:97px;" width="920" height="23" viewBox="0 0 920 23"><path d="M6.500 22.500L25 4.500Q26.500 3.500 28 3.500H171Q173.500 3.500 173.500 6V22.500" fill="#e6e6e6" stroke="#6e6e6e"/><path d="M166 22.500L183 4.500Q184.500 3.500 186 3.500H371.500Q374.500 3.500 374.500 6.500V23.500H166z" fill="#f7f7f7" stroke="none"/><path d="M166 22.500L183 4.500Q184.500 3.500 186 3.500H371.500Q374.500 3.500 374.500 6.500V22.500" fill="none" stroke="#6e6e6e"/></svg>
<svg style="left:544px;top:102px;" width="16" height="16" viewBox="0 0 16 16"><path d="M8 0.500L0 8.500h2.500v7h4v-5h3v5h4v-7H16z" fill="#6b6b6b"/><rect x="11.500" y="0.500" width="2.500" height="4" fill="#2f6fb5"/></svg>
<span id="t51" style="top:102.5px;font-size:11px;line-height:15px;color:#000;white-space:nowrap;letter-spacing:-0.195px;left:571px;">Home | Dashboard</span>
<svg style="left:705px;top:102px;" width="14" height="16" viewBox="0 0 14 16"><rect x="0" y="1" width="14" height="15" rx="1.200" fill="#e8845c"/><rect x="2" y="0" width="2" height="3.800" fill="#fff"/><rect x="2" y="2.400" width="2" height="1.400" fill="#b5cfe0"/><rect x="2" y="-0.300" width="2" height="1" rx="0.500" fill="#6e6e6e"/><rect x="6" y="0" width="2" height="3.800" fill="#fff"/><rect x="6" y="2.400" width="2" height="1.400" fill="#b5cfe0"/><rect x="6" y="-0.300" width="2" height="1" rx="0.500" fill="#6e6e6e"/><rect x="10" y="0" width="2" height="3.800" fill="#fff"/><rect x="10" y="2.400" width="2" height="1.400" fill="#b5cfe0"/><rect x="10" y="-0.300" width="2" height="1" rx="0.500" fill="#6e6e6e"/></svg>
<span id="t52" style="top:102.5px;font-size:11px;line-height:15px;color:#000;white-space:nowrap;font-weight:700;letter-spacing:0.710px;left:725px;">AR2-001/000005 (Valut...</span>
<svg style="left:877px;top:105px;" width="12" height="11" viewBox="0 0 12 11"><path d="M1 0.500l10 10M11 0.500l-10 10" stroke="#000" stroke-width="1.500"/></svg>
<svg style="left:1421px;top:107px;" width="9" height="5" viewBox="0 0 9 5"><path d="M0 0h9l-4.500 5z" fill="#000"/></svg>
<div style="left:519px;top:120px;width:282px;height:894px;background:#fff;"></div>
<div style="left:519px;top:120px;width:282px;height:26px;background:#f5f6f7;"></div>
<svg style="left:522px;top:125px;" width="3" height="16" viewBox="0 0 3 16"><rect x="1" y="1" width="2" height="2" fill="#fff"/><rect x="0" y="0" width="2" height="2" fill="#a6a6a6"/><rect x="1" y="5" width="2" height="2" fill="#fff"/><rect x="0" y="4" width="2" height="2" fill="#a6a6a6"/><rect x="1" y="9" width="2" height="2" fill="#fff"/><rect x="0" y="8" width="2" height="2" fill="#a6a6a6"/><rect x="1" y="13" width="2" height="2" fill="#fff"/><rect x="0" y="12" width="2" height="2" fill="#a6a6a6"/></svg>
<svg style="left:530px;top:125px;" width="16" height="16" viewBox="0 0 16 16"><circle cx="8" cy="8" r="8" fill="#4fa882"/><path d="M8 3.500v9M3.500 8h9" stroke="#fff" stroke-width="2.200"/></svg>
<span id="t53" style="top:125.0px;font-size:12px;line-height:16px;color:#000;white-space:nowrap;letter-spacing:0.285px;left:549px;">Aggiungi</span>
<svg style="left:603px;top:132px;" width="7" height="4" viewBox="0 0 7 4"><path d="M0.500 0h6l-3 3.300z" fill="#000"/></svg>
<svg style="left:740px;top:125px;" width="14" height="16" viewBox="0 0 14 16"><path d="M0 0h14l-5.500 7v9l-3-1.500v-7.500z" fill="#7a7a7a"/></svg>
<span id="t54" style="top:125.0px;font-size:12px;line-height:16px;color:#000;white-space:nowrap;letter-spacing:0.055px;left:758px;">Filtro</span>
<svg style="left:790px;top:132px;" width="7" height="4" viewBox="0 0 7 4"><path d="M0.500 0h6l-3 3.300z" fill="#000"/></svg>
<span id="t55" style="top:147.5px;font-size:12px;line-height:16px;color:#000;white-space:nowrap;letter-spacing:-0.045px;left:524px;">Pericoli</span>
<div style="left:699px;top:146px;width:1px;height:19px;background:#e0e0e0;"></div>
<span id="t56" style="top:147.5px;font-size:12px;line-height:16px;color:#000;white-space:nowrap;letter-spacing:-0.115px;left:705px;">Requisiti</span>
<div style="left:799px;top:146px;width:1px;height:19px;background:#e0e0e0;"></div>
<div style="left:519px;top:186px;width:282px;height:20px;background:#e6e6fa;"></div>
<svg style="left:526px;top:170.5px;" width="9" height="9" viewBox="0 0 9 9"><rect x="0.500" y="0.500" width="8" height="8" fill="#fff" stroke="#919191"/><path d="M2 4.500h5" stroke="#3a4e8c"/></svg>
<div style="left:536px;top:176px;width:6px;height:1px;background:repeating-linear-gradient(90deg,#a0a0a0 0 1px,transparent 1px 2px);"></div>
<svg style="left:543px;top:169px;" width="13" height="13" viewBox="0 0 13 13"><rect x="0.500" y="0.500" width="12" height="12" fill="#fff" stroke="#c8c8c8"/></svg>
<svg style="left:559px;top:168px;" width="16" height="16" viewBox="0 0 16 16"><path d="M0.500 13V1.500h5l1.500 2h7.500v3" fill="#8a8a8a" stroke="#6a6a6a"/><path d="M2.500 5.500h13l-1.500 9.500h-13z" fill="#eeb25c"/></svg>
<span id="t57" style="top:167.5px;font-size:12px;line-height:16px;color:#000;white-space:nowrap;letter-spacing:-0.069px;left:579px;">1 - Pericoli di natura...</span>
<div style="left:550px;top:196px;width:11px;height:1px;background:repeating-linear-gradient(90deg,#a0a0a0 0 1px,transparent 1px 2px);"></div>
<svg style="left:562px;top:189px;" width="13" height="13" viewBox="0 0 13 13"><rect x="0.500" y="0.500" width="12" height="12" fill="#fff" stroke="#333"/><path d="M2.500 6.500l2.800 3 5-6.500" fill="none" stroke="#222" stroke-width="1.300"/></svg>
<svg style="left:578px;top:188px;" width="12" height="15" viewBox="0 0 12 15"><g transform="translate(-2.900,-2.500) scale(0.310)"><path d="M27.400 8L31.200 23L31.400 17Q36.500 22 38.200 31L40 27l2 3.800L36 40L30.600 54.500Q22 55.500 16.500 47L9.500 34L15.300 36.400L13 25.100L18.500 28.800L18.500 16.400L23.700 19.600z" fill="#e8845c"/><path d="M26.500 32L24 37L23 35.500L22 40L20.800 39L20.500 43.500L19 43Q21 50 29 52.500L36 45L28.500 36z" fill="#fff"/></g></svg>
<svg style="left:585px;top:195px;" width="9" height="9" viewBox="0 0 9 9"><circle cx="4.500" cy="4.500" r="4.600" fill="#3d9b6e" stroke="#fff" stroke-width="0.800"/><path d="M2.300 4.600l1.600 1.700 2.800-3.300" fill="none" stroke="#fff" stroke-width="1.200"/></svg>
<span id="t58" style="top:187.5px;font-size:12px;line-height:16px;color:#000;white-space:nowrap;letter-spacing:-0.022px;left:598px;">1.1 - Investimento</span>
<span id="t59" style="top:186.0px;font-size:12px;line-height:16px;color:#000;white-space:nowrap;letter-spacing:-0.236px;left:704px;">1.3.2 - Rischio d...</span>
<div style="left:550px;top:216px;width:11px;height:1px;background:repeating-linear-gradient(90deg,#a0a0a0 0 1px,transparent 1px 2px);"></div>
<svg style="left:562px;top:209px;" width="13" height="13" viewBox="0 0 13 13"><rect x="0.500" y="0.500" width="12" height="12" fill="#fff" stroke="#333"/></svg>
<svg style="left:580px;top:208px;" width="12" height="16" viewBox="0 0 12 16"><path d="M6.300 0c0.500 2.500 3.800 4.500 4.600 7.500c0.400-0.800 0.500-1.600 0.400-2.500c1.300 2 1.500 4.200 0.700 6.500a6.200 6.200 0 01-12 -0.500c-0.300-1.800 0-3.300 0.800-4.800c0.100 1 0.500 1.800 1.200 2.500c0-2 0.800-3.200 1.800-4.500c0.200 0.800 0.500 1.300 1 1.800C4.800 4 5.200 2 6.300 0z" fill="#f6c9b8"/><path d="M6 8.500c1 1.500 2.300 2.500 2.300 4.300a2.300 2.300 0 01-4.600 0c0-1.700 1.300-2.800 2.300-4.300z" fill="#fff"/></svg>
<span id="t60" style="top:207.5px;font-size:12px;line-height:16px;color:#000;white-space:nowrap;letter-spacing:-0.198px;left:598px;">1.2 - Spinta</span>
<div style="left:550px;top:236px;width:11px;height:1px;background:repeating-linear-gradient(90deg,#a0a0a0 0 1px,transparent 1px 2px);"></div>
<svg style="left:562px;top:229px;" width="13" height="13" viewBox="0 0 13 13"><rect x="0.500" y="0.500" width="12" height="12" fill="#fff" stroke="#333"/></svg>
<svg style="left:578px;top:228px;" width="12" height="15" viewBox="0 0 12 15"><g transform="translate(-2.900,-2.500) scale(0.310)"><path d="M27.400 8L31.200 23L31.400 17Q36.500 22 38.200 31L40 27l2 3.800L36 40L30.600 54.500Q22 55.500 16.500 47L9.500 34L15.300 36.400L13 25.100L18.500 28.800L18.500 16.400L23.700 19.600z" fill="#e8845c"/><path d="M26.500 32L24 37L23 35.500L22 40L20.800 39L20.500 43.500L19 43Q21 50 29 52.500L36 45L28.500 36z" fill="#fff"/></g></svg>
<svg style="left:585px;top:235px;" width="9" height="9" viewBox="0 0 9 9"><rect x="0" y="0" width="9" height="9" rx="1" fill="#9a9a9a"/><text x="4.500" y="7.300" font-size="7.500" font-weight="700" fill="#fff" text-anchor="middle" font-family="Liberation Sans">?</text></svg>
<span id="t61" style="top:227.5px;font-size:12px;line-height:16px;color:#000;white-space:nowrap;letter-spacing:-0.195px;left:598px;">1.3 - Schiacciam...</span>
<span id="t62" style="top:226.0px;font-size:12px;line-height:16px;color:#000;white-space:nowrap;letter-spacing:-0.236px;left:704px;">1.3.7 - Rischi do...</span>
<div style="left:550px;top:256px;width:11px;height:1px;background:repeating-linear-gradient(90deg,#a0a0a0 0 1px,transparent 1px 2px);"></div>
<svg style="left:562px;top:249px;" width="13" height="13" viewBox="0 0 13 13"><rect x="0.500" y="0.500" width="12" height="12" fill="#fff" stroke="#333"/></svg>
<svg style="left:580px;top:248px;" width="12" height="16" viewBox="0 0 12 16"><path d="M6.300 0c0.500 2.500 3.800 4.500 4.600 7.500c0.400-0.800 0.500-1.600 0.400-2.500c1.300 2 1.500 4.200 0.700 6.500a6.200 6.200 0 01-12 -0.500c-0.300-1.800 0-3.300 0.800-4.800c0.100 1 0.500 1.800 1.200 2.500c0-2 0.800-3.200 1.800-4.500c0.200 0.800 0.500 1.300 1 1.800C4.800 4 5.200 2 6.300 0z" fill="#f6c9b8"/><path d="M6 8.500c1 1.500 2.300 2.500 2.300 4.300a2.300 2.300 0 01-4.600 0c0-1.700 1.300-2.800 2.300-4.300z" fill="#fff"/></svg>
<span id="t63" style="top:247.5px;font-size:12px;line-height:16px;color:#000;white-space:nowrap;letter-spacing:-0.214px;left:598px;">1.4 - Taglio o sez...</span>
<div style="left:550px;top:276px;width:11px;height:1px;background:repeating-linear-gradient(90deg,#a0a0a0 0 1px,transparent 1px 2px);"></div>
<svg style="left:562px;top:269px;" width="13" height="13" viewBox="0 0 13 13"><rect x="0.500" y="0.500" width="12" height="12" fill="#fff" stroke="#333"/></svg>
<svg style="left:580px;top:268px;" width="12" height="16" viewBox="0 0 12 16"><path d="M6.300 0c0.500 2.500 3.800 4.500 4.600 7.500c0.400-0.800 0.500-1.600 0.400-2.500c1.300 2 1.500 4.200 0.700 6.500a6.200 6.200 0 01-12 -0.500c-0.300-1.800 0-3.300 0.800-4.800c0.100 1 0.500 1.800 1.200 2.500c0-2 0.800-3.200 1.800-4.500c0.200 0.800 0.500 1.300 1 1.800C4.800 4 5.200 2 6.300 0z" fill="#f6c9b8"/><path d="M6 8.500c1 1.500 2.300 2.500 2.300 4.300a2.300 2.300 0 01-4.600 0c0-1.700 1.300-2.800 2.300-4.300z" fill="#fff"/></svg>
<span id="t64" style="top:267.5px;font-size:12px;line-height:16px;color:#000;white-space:nowrap;letter-spacing:-0.230px;left:598px;">1.5 - Trasciname...</span>
<div style="left:550px;top:296px;width:11px;height:1px;background:repeating-linear-gradient(90deg,#a0a0a0 0 1px,transparent 1px 2px);"></div>
<svg style="left:562px;top:289px;" width="13" height="13" viewBox="0 0 13 13"><rect x="0.500" y="0.500" width="12" height="12" fill="#fff" stroke="#333"/></svg>
<svg style="left:580px;top:288px;" width="12" height="16" viewBox="0 0 12 16"><path d="M6.300 0c0.500 2.500 3.800 4.500 4.600 7.500c0.400-0.800 0.500-1.600 0.400-2.500c1.300 2 1.500 4.200 0.700 6.500a6.200 6.200 0 01-12 -0.500c-0.300-1.800 0-3.300 0.800-4.800c0.100 1 0.500 1.800 1.200 2.500c0-2 0.800-3.200 1.800-4.500c0.200 0.800 0.500 1.300 1 1.800C4.800 4 5.200 2 6.300 0z" fill="#f6c9b8"/><path d="M6 8.500c1 1.500 2.300 2.500 2.300 4.300a2.300 2.300 0 01-4.600 0c0-1.700 1.300-2.800 2.300-4.300z" fill="#fff"/></svg>
<span id="t65" style="top:287.5px;font-size:12px;line-height:16px;color:#000;white-space:nowrap;letter-spacing:-0.020px;left:598px;">1.6 - Impigliame...</span>
<div style="left:550px;top:316px;width:11px;height:1px;background:repeating-linear-gradient(90deg,#a0a0a0 0 1px,transparent 1px 2px);"></div>
<svg style="left:562px;top:309px;" width="13" height="13" viewBox="0 0 13 13"><rect x="0.500" y="0.500" width="12" height="12" fill="#fff" stroke="#333"/></svg>
<svg style="left:580px;top:308px;" width="12" height="16" viewBox="0 0 12 16"><path d="M6.300 0c0.500 2.500 3.800 4.500 4.600 7.500c0.400-0.800 0.500-1.600 0.400-2.500c1.300 2 1.500 4.200 0.700 6.500a6.200 6.200 0 01-12 -0.500c-0.300-1.800 0-3.300 0.800-4.800c0.100 1 0.500 1.800 1.200 2.500c0-2 0.800-3.200 1.800-4.500c0.200 0.800 0.500 1.300 1 1.800C4.800 4 5.200 2 6.300 0z" fill="#f6c9b8"/><path d="M6 8.500c1 1.500 2.300 2.500 2.300 4.300a2.300 2.300 0 01-4.600 0c0-1.700 1.300-2.800 2.300-4.300z" fill="#fff"/></svg>
<span id="t66" style="top:307.5px;font-size:12px;line-height:16px;color:#000;white-space:nowrap;letter-spacing:0.013px;left:598px;">1.7 - Attrito o ab...</span>
<div style="left:550px;top:336px;width:11px;height:1px;background:repeating-linear-gradient(90deg,#a0a0a0 0 1px,transparent 1px 2px);"></div>
<svg style="left:562px;top:329px;" width="13" height="13" viewBox="0 0 13 13"><rect x="0.500" y="0.500" width="12" height="12" fill="#fff" stroke="#333"/></svg>
<svg style="left:580px;top:328px;" width="12" height="16" viewBox="0 0 12 16"><path d="M6.300 0c0.500 2.500 3.800 4.500 4.600 7.500c0.400-0.800 0.500-1.600 0.400-2.500c1.300 2 1.500 4.200 0.700 6.500a6.200 6.200 0 01-12 -0.500c-0.300-1.800 0-3.300 0.800-4.800c0.100 1 0.500 1.800 1.200 2.500c0-2 0.800-3.200 1.800-4.500c0.200 0.800 0.500 1.300 1 1.800C4.800 4 5.200 2 6.300 0z" fill="#f6c9b8"/><path d="M6 8.500c1 1.500 2.300 2.500 2.300 4.300a2.300 2.300 0 01-4.600 0c0-1.700 1.300-2.800 2.300-4.300z" fill="#fff"/></svg>
<span id="t67" style="top:327.5px;font-size:12px;line-height:16px;color:#000;white-space:nowrap;letter-spacing:-0.202px;left:598px;">1.8 - Urto</span>
<div style="left:550px;top:356px;width:11px;height:1px;background:repeating-linear-gradient(90deg,#a0a0a0 0 1px,transparent 1px 2px);"></div>
<svg style="left:562px;top:349px;" width="13" height="13" viewBox="0 0 13 13"><rect x="0.500" y="0.500" width="12" height="12" fill="#fff" stroke="#333"/></svg>
<svg style="left:580px;top:348px;" width="12" height="16" viewBox="0 0 12 16"><path d="M6.300 0c0.500 2.500 3.800 4.500 4.600 7.500c0.400-0.800 0.500-1.600 0.400-2.500c1.300 2 1.500 4.200 0.700 6.500a6.200 6.200 0 01-12 -0.500c-0.300-1.800 0-3.300 0.800-4.800c0.100 1 0.500 1.800 1.200 2.500c0-2 0.800-3.200 1.800-4.500c0.200 0.800 0.500 1.300 1 1.800C4.800 4 5.200 2 6.300 0z" fill="#f6c9b8"/><path d="M6 8.500c1 1.500 2.300 2.500 2.300 4.300a2.300 2.300 0 01-4.600 0c0-1.700 1.300-2.800 2.300-4.300z" fill="#fff"/></svg>
<span id="t68" style="top:347.5px;font-size:12px;line-height:16px;color:#000;white-space:nowrap;letter-spacing:-0.159px;left:598px;">1.9 - Iniezione</span>
<div style="left:550px;top:376px;width:11px;height:1px;background:repeating-linear-gradient(90deg,#a0a0a0 0 1px,transparent 1px 2px);"></div>
<svg style="left:562px;top:369px;" width="13" height="13" viewBox="0 0 13 13"><rect x="0.500" y="0.500" width="12" height="12" fill="#fff" stroke="#333"/></svg>
<svg style="left:580px;top:368px;" width="12" height="16" viewBox="0 0 12 16"><path d="M6.300 0c0.500 2.500 3.800 4.500 4.600 7.500c0.400-0.800 0.500-1.600 0.400-2.500c1.300 2 1.500 4.200 0.700 6.500a6.200 6.200 0 01-12 -0.500c-0.300-1.800 0-3.300 0.800-4.800c0.100 1 0.500 1.800 1.200 2.500c0-2 0.800-3.200 1.800-4.500c0.200 0.800 0.500 1.300 1 1.800C4.800 4 5.200 2 6.300 0z" fill="#f6c9b8"/><path d="M6 8.500c1 1.500 2.300 2.500 2.300 4.300a2.300 2.300 0 01-4.600 0c0-1.700 1.300-2.800 2.300-4.300z" fill="#fff"/></svg>
<span id="t69" style="top:367.5px;font-size:12px;line-height:16px;color:#000;white-space:nowrap;letter-spacing:-0.280px;left:598px;">1.10 - Cesoiame...</span>
<div style="left:550px;top:396px;width:11px;height:1px;background:repeating-linear-gradient(90deg,#a0a0a0 0 1px,transparent 1px 2px);"></div>
<svg style="left:562px;top:389px;" width="13" height="13" viewBox="0 0 13 13"><rect x="0.500" y="0.500" width="12" height="12" fill="#fff" stroke="#333"/></svg>
<svg style="left:580px;top:388px;" width="12" height="16" viewBox="0 0 12 16"><path d="M6.300 0c0.500 2.500 3.800 4.500 4.600 7.500c0.400-0.800 0.500-1.600 0.400-2.500c1.300 2 1.500 4.200 0.700 6.500a6.200 6.200 0 01-12 -0.500c-0.300-1.800 0-3.300 0.800-4.800c0.100 1 0.500 1.800 1.200 2.500c0-2 0.800-3.200 1.800-4.500c0.200 0.800 0.500 1.300 1 1.800C4.800 4 5.200 2 6.300 0z" fill="#f6c9b8"/><path d="M6 8.500c1 1.500 2.300 2.500 2.300 4.300a2.300 2.300 0 01-4.600 0c0-1.700 1.300-2.800 2.300-4.300z" fill="#fff"/></svg>
<span id="t70" style="top:387.5px;font-size:12px;line-height:16px;color:#000;white-space:nowrap;letter-spacing:-0.183px;left:598px;">1.11 - Scivolame...</span>
<div style="left:550px;top:416px;width:11px;height:1px;background:repeating-linear-gradient(90deg,#a0a0a0 0 1px,transparent 1px 2px);"></div>
<svg style="left:562px;top:409px;" width="13" height="13" viewBox="0 0 13 13"><rect x="0.500" y="0.500" width="12" height="12" fill="#fff" stroke="#333"/></svg>
<svg style="left:580px;top:408px;" width="12" height="16" viewBox="0 0 12 16"><path d="M6.300 0c0.500 2.500 3.800 4.500 4.600 7.500c0.400-0.800 0.500-1.600 0.400-2.500c1.300 2 1.500 4.200 0.700 6.500a6.200 6.200 0 01-12 -0.500c-0.300-1.800 0-3.300 0.800-4.800c0.100 1 0.500 1.800 1.200 2.500c0-2 0.800-3.200 1.800-4.500c0.200 0.800 0.500 1.300 1 1.800C4.800 4 5.200 2 6.300 0z" fill="#f6c9b8"/><path d="M6 8.500c1 1.500 2.300 2.500 2.300 4.300a2.300 2.300 0 01-4.600 0c0-1.700 1.300-2.800 2.300-4.300z" fill="#fff"/></svg>
<span id="t71" style="top:407.5px;font-size:12px;line-height:16px;color:#000;white-space:nowrap;letter-spacing:-0.236px;left:598px;">1.12 - Perforazio...</span>
<div style="left:550px;top:436px;width:11px;height:1px;background:repeating-linear-gradient(90deg,#a0a0a0 0 1px,transparent 1px 2px);"></div>
<svg style="left:562px;top:429px;" width="13" height="13" viewBox="0 0 13 13"><rect x="0.500" y="0.500" width="12" height="12" fill="#fff" stroke="#333"/></svg>
<svg style="left:580px;top:428px;" width="12" height="16" viewBox="0 0 12 16"><path d="M6.300 0c0.500 2.500 3.800 4.500 4.600 7.500c0.400-0.800 0.500-1.600 0.400-2.500c1.300 2 1.500 4.200 0.700 6.500a6.200 6.200 0 01-12 -0.500c-0.300-1.800 0-3.300 0.800-4.800c0.100 1 0.500 1.800 1.200 2.500c0-2 0.800-3.200 1.800-4.500c0.200 0.800 0.500 1.300 1 1.800C4.800 4 5.200 2 6.300 0z" fill="#f6c9b8"/><path d="M6 8.500c1 1.500 2.300 2.500 2.300 4.300a2.300 2.300 0 01-4.600 0c0-1.700 1.300-2.800 2.300-4.300z" fill="#fff"/></svg>
<span id="t72" style="top:427.5px;font-size:12px;line-height:16px;color:#000;white-space:nowrap;letter-spacing:-0.167px;left:598px;">1.13 - Soffocame...</span>
<svg style="left:526px;top:450.5px;" width="9" height="9" viewBox="0 0 9 9"><rect x="0.500" y="0.500" width="8" height="8" fill="#fff" stroke="#919191"/><path d="M2 4.500h5" stroke="#3a4e8c"/><path d="M4.500 2v5" stroke="#3a4e8c"/></svg>
<div style="left:536px;top:456px;width:6px;height:1px;background:repeating-linear-gradient(90deg,#a0a0a0 0 1px,transparent 1px 2px);"></div>
<svg style="left:543px;top:449px;" width="13" height="13" viewBox="0 0 13 13"><rect x="0.500" y="0.500" width="12" height="12" fill="#fff" stroke="#c8c8c8"/></svg>
<svg style="left:559px;top:448px;" width="16" height="16" viewBox="0 0 16 16"><path d="M0.500 13V1.500h5l1.500 2h7.500v3" fill="#8a8a8a" stroke="#6a6a6a"/><path d="M2.500 5.500h13l-1.500 9.500h-13z" fill="#eeb25c"/></svg>
<span id="t73" style="top:447.5px;font-size:12px;line-height:16px;color:#000;white-space:nowrap;letter-spacing:-0.069px;left:579px;">2 - Pericoli di natura...</span>
<svg style="left:526px;top:470.5px;" width="9" height="9" viewBox="0 0 9 9"><rect x="0.500" y="0.500" width="8" height="8" fill="#fff" stroke="#919191"/><path d="M2 4.500h5" stroke="#3a4e8c"/><path d="M4.500 2v5" stroke="#3a4e8c"/></svg>
<div style="left:536px;top:476px;width:6px;height:1px;background:repeating-linear-gradient(90deg,#a0a0a0 0 1px,transparent 1px 2px);"></div>
<svg style="left:543px;top:469px;" width="13" height="13" viewBox="0 0 13 13"><rect x="0.500" y="0.500" width="12" height="12" fill="#fff" stroke="#c8c8c8"/></svg>
<svg style="left:559px;top:468px;" width="16" height="16" viewBox="0 0 16 16"><path d="M0.500 13V1.500h5l1.500 2h7.500v3" fill="#8a8a8a" stroke="#6a6a6a"/><path d="M2.500 5.500h13l-1.500 9.500h-13z" fill="#eeb25c"/></svg>
<span id="t74" style="top:467.5px;font-size:12px;line-height:16px;color:#000;white-space:nowrap;letter-spacing:-0.069px;left:579px;">3 - Pericoli di natura...</span>
<svg style="left:526px;top:490.5px;" width="9" height="9" viewBox="0 0 9 9"><rect x="0.500" y="0.500" width="8" height="8" fill="#fff" stroke="#919191"/><path d="M2 4.500h5" stroke="#3a4e8c"/><path d="M4.500 2v5" stroke="#3a4e8c"/></svg>
<div style="left:536px;top:496px;width:6px;height:1px;background:repeating-linear-gradient(90deg,#a0a0a0 0 1px,transparent 1px 2px);"></div>
<svg style="left:543px;top:489px;" width="13" height="13" viewBox="0 0 13 13"><rect x="0.500" y="0.500" width="12" height="12" fill="#fff" stroke="#c8c8c8"/></svg>
<svg style="left:559px;top:488px;" width="16" height="16" viewBox="0 0 16 16"><path d="M0.500 13V1.500h5l1.500 2h7.500v3" fill="#8a8a8a" stroke="#6a6a6a"/><path d="M2.500 5.500h13l-1.500 9.500h-13z" fill="#eeb25c"/></svg>
<span id="t75" style="top:487.5px;font-size:12px;line-height:16px;color:#000;white-space:nowrap;letter-spacing:-0.109px;left:579px;">4 - Pericoli generati ...</span>
<svg style="left:526px;top:510.5px;" width="9" height="9" viewBox="0 0 9 9"><rect x="0.500" y="0.500" width="8" height="8" fill="#fff" stroke="#919191"/><path d="M2 4.500h5" stroke="#3a4e8c"/><path d="M4.500 2v5" stroke="#3a4e8c"/></svg>
<div style="left:536px;top:516px;width:6px;height:1px;background:repeating-linear-gradient(90deg,#a0a0a0 0 1px,transparent 1px 2px);"></div>
<svg style="left:543px;top:509px;" width="13" height="13" viewBox="0 0 13 13"><rect x="0.500" y="0.500" width="12" height="12" fill="#fff" stroke="#c8c8c8"/></svg>
<svg style="left:559px;top:508px;" width="16" height="16" viewBox="0 0 16 16"><path d="M0.500 13V1.500h5l1.500 2h7.500v3" fill="#8a8a8a" stroke="#6a6a6a"/><path d="M2.500 5.500h13l-1.500 9.500h-13z" fill="#eeb25c"/></svg>
<span id="t76" style="top:507.5px;font-size:12px;line-height:16px;color:#000;white-space:nowrap;letter-spacing:-0.109px;left:579px;">5 - Pericoli generati ...</span>
<svg style="left:526px;top:530.5px;" width="9" height="9" viewBox="0 0 9 9"><rect x="0.500" y="0.500" width="8" height="8" fill="#fff" stroke="#919191"/><path d="M2 4.500h5" stroke="#3a4e8c"/><path d="M4.500 2v5" stroke="#3a4e8c"/></svg>
<div style="left:536px;top:536px;width:6px;height:1px;background:repeating-linear-gradient(90deg,#a0a0a0 0 1px,transparent 1px 2px);"></div>
<svg style="left:543px;top:529px;" width="13" height="13" viewBox="0 0 13 13"><rect x="0.500" y="0.500" width="12" height="12" fill="#fff" stroke="#c8c8c8"/></svg>
<svg style="left:559px;top:528px;" width="16" height="16" viewBox="0 0 16 16"><path d="M0.500 13V1.500h5l1.500 2h7.500v3" fill="#8a8a8a" stroke="#6a6a6a"/><path d="M2.500 5.500h13l-1.500 9.500h-13z" fill="#eeb25c"/></svg>
<span id="t77" style="top:527.5px;font-size:12px;line-height:16px;color:#000;white-space:nowrap;letter-spacing:-0.109px;left:579px;">6 - Pericoli generati ...</span>
<svg style="left:526px;top:550.5px;" width="9" height="9" viewBox="0 0 9 9"><rect x="0.500" y="0.500" width="8" height="8" fill="#fff" stroke="#919191"/><path d="M2 4.500h5" stroke="#3a4e8c"/><path d="M4.500 2v5" stroke="#3a4e8c"/></svg>
<div style="left:536px;top:556px;width:6px;height:1px;background:repeating-linear-gradient(90deg,#a0a0a0 0 1px,transparent 1px 2px);"></div>
<svg style="left:543px;top:549px;" width="13" height="13" viewBox="0 0 13 13"><rect x="0.500" y="0.500" width="12" height="12" fill="#fff" stroke="#c8c8c8"/></svg>
<svg style="left:559px;top:548px;" width="16" height="16" viewBox="0 0 16 16"><path d="M0.500 13V1.500h5l1.500 2h7.500v3" fill="#8a8a8a" stroke="#6a6a6a"/><path d="M2.500 5.500h13l-1.500 9.500h-13z" fill="#eeb25c"/></svg>
<span id="t78" style="top:547.5px;font-size:12px;line-height:16px;color:#000;white-space:nowrap;letter-spacing:-0.109px;left:579px;">7 - Pericoli generati ...</span>
<svg style="left:526px;top:570.5px;" width="9" height="9" viewBox="0 0 9 9"><rect x="0.500" y="0.500" width="8" height="8" fill="#fff" stroke="#919191"/><path d="M2 4.500h5" stroke="#3a4e8c"/><path d="M4.500 2v5" stroke="#3a4e8c"/></svg>
<div style="left:536px;top:576px;width:6px;height:1px;background:repeating-linear-gradient(90deg,#a0a0a0 0 1px,transparent 1px 2px);"></div>
<svg style="left:543px;top:569px;" width="13" height="13" viewBox="0 0 13 13"><rect x="0.500" y="0.500" width="12" height="12" fill="#fff" stroke="#c8c8c8"/></svg>
<svg style="left:559px;top:568px;" width="16" height="16" viewBox="0 0 16 16"><path d="M0.500 13V1.500h5l1.500 2h7.500v3" fill="#8a8a8a" stroke="#6a6a6a"/><path d="M2.500 5.500h13l-1.500 9.500h-13z" fill="#eeb25c"/></svg>
<span id="t79" style="top:567.5px;font-size:12px;line-height:16px;color:#000;white-space:nowrap;letter-spacing:-0.069px;left:579px;">8 - Pericoli di natura...</span>
<svg style="left:526px;top:590.5px;" width="9" height="9" viewBox="0 0 9 9"><rect x="0.500" y="0.500" width="8" height="8" fill="#fff" stroke="#919191"/><path d="M2 4.500h5" stroke="#3a4e8c"/><path d="M4.500 2v5" stroke="#3a4e8c"/></svg>
<div style="left:536px;top:596px;width:6px;height:1px;background:repeating-linear-gradient(90deg,#a0a0a0 0 1px,transparent 1px 2px);"></div>
<svg style="left:543px;top:589px;" width="13" height="13" viewBox="0 0 13 13"><rect x="0.500" y="0.500" width="12" height="12" fill="#fff" stroke="#c8c8c8"/></svg>
<svg style="left:559px;top:588px;" width="16" height="16" viewBox="0 0 16 16"><path d="M0.500 13V1.500h5l1.500 2h7.500v3" fill="#8a8a8a" stroke="#6a6a6a"/><path d="M2.500 5.500h13l-1.500 9.500h-13z" fill="#eeb25c"/></svg>
<span id="t80" style="top:587.5px;font-size:12px;line-height:16px;color:#000;white-space:nowrap;letter-spacing:-0.156px;left:579px;">9 - Pericoli associati ...</span>
<svg style="left:526px;top:610.5px;" width="9" height="9" viewBox="0 0 9 9"><rect x="0.500" y="0.500" width="8" height="8" fill="#fff" stroke="#919191"/><path d="M2 4.500h5" stroke="#3a4e8c"/><path d="M4.500 2v5" stroke="#3a4e8c"/></svg>
<div style="left:536px;top:616px;width:6px;height:1px;background:repeating-linear-gradient(90deg,#a0a0a0 0 1px,transparent 1px 2px);"></div>
<svg style="left:543px;top:609px;" width="13" height="13" viewBox="0 0 13 13"><rect x="0.500" y="0.500" width="12" height="12" fill="#fff" stroke="#c8c8c8"/></svg>
<svg style="left:559px;top:608px;" width="16" height="16" viewBox="0 0 16 16"><path d="M0.500 13V1.500h5l1.500 2h7.500v3" fill="#8a8a8a" stroke="#6a6a6a"/><path d="M2.500 5.500h13l-1.500 9.500h-13z" fill="#eeb25c"/></svg>
<span id="t81" style="top:607.5px;font-size:12px;line-height:16px;color:#000;white-space:nowrap;letter-spacing:-0.098px;left:579px;">10 - Combinazione ...</span>
<div style="left:530px;top:181px;width:1px;height:430px;background:repeating-linear-gradient(180deg,#a0a0a0 0 1px,transparent 1px 2px);"></div>
<div style="left:549px;top:186px;width:1px;height:251px;background:repeating-linear-gradient(180deg,#a0a0a0 0 1px,transparent 1px 2px);"></div>
<div style="left:801px;top:120px;width:4px;height:894px;background:#f0f0f0;"></div>
<div style="left:805px;top:120px;width:634px;height:51px;background:#f5f6f7;"></div>
<svg style="left:808px;top:126px;" width="3" height="38" viewBox="0 0 3 38"><rect x="1" y="1" width="2" height="2" fill="#fff"/><rect x="0" y="0" width="2" height="2" fill="#a6a6a6"/><rect x="1" y="5" width="2" height="2" fill="#fff"/><rect x="0" y="4" width="2" height="2" fill="#a6a6a6"/><rect x="1" y="9" width="2" height="2" fill="#fff"/><rect x="0" y="8" width="2" height="2" fill="#a6a6a6"/><rect x="1" y="13" width="2" height="2" fill="#fff"/><rect x="0" y="12" width="2" height="2" fill="#a6a6a6"/><rect x="1" y="17" width="2" height="2" fill="#fff"/><rect x="0" y="16" width="2" height="2" fill="#a6a6a6"/><rect x="1" y="21" width="2" height="2" fill="#fff"/><rect x="0" y="20" width="2" height="2" fill="#a6a6a6"/><rect x="1" y="25" width="2" height="2" fill="#fff"/><rect x="0" y="24" width="2" height="2" fill="#a6a6a6"/><rect x="1" y="29" width="2" height="2" fill="#fff"/><rect x="0" y="28" width="2" height="2" fill="#a6a6a6"/><rect x="1" y="33" width="2" height="2" fill="#fff"/><rect x="0" y="32" width="2" height="2" fill="#a6a6a6"/></svg>
<svg style="left:836.5px;top:124.0px;" width="25.0" height="25.0" viewBox="0 0 25.0 25.0"><circle cx="12.5" cy="12.5" r="11.5" fill="#fff" stroke="#2f6fb5" stroke-width="2"/><path d="M19.6875 10.295833333333334h-7.1875v-4.3125l-7.1875 6.516666666666667 7.1875 6.516666666666667v-4.3125h7.1875z" fill="#2f6fb5"/></svg>
<span id="t82" style="top:149.0px;font-size:12px;line-height:16px;color:#000;white-space:nowrap;letter-spacing:-0.239px;left:819.00px;">Precedente</span>
<svg style="left:900px;top:124.5px;" width="24" height="24" viewBox="0 0 24 24"><circle cx="12" cy="12" r="12" fill="#4fa882"/><path d="M5.5 12.5l4.5 4.5 8.0 -9.0" fill="none" stroke="#fff" stroke-width="3.2"/></svg>
<span id="t83" style="top:149.0px;font-size:12px;line-height:16px;color:#000;white-space:nowrap;letter-spacing:-0.379px;left:889.00px;">Presente</span>
<svg style="left:939px;top:144px;" width="7" height="4" viewBox="0 0 7 4"><path d="M0.500 0h6l-3 3.300z" fill="#000"/></svg>
<span id="t84" style="top:124.5px;font-size:11px;line-height:15px;color:#000;white-space:nowrap;letter-spacing:0.568px;left:955px;">1.1</span>
<span id="t85" style="top:141.0px;font-size:21px;line-height:26px;color:#000;white-space:nowrap;letter-spacing:0.578px;left:955px;">Investimento</span>
<svg style="left:1391.5px;top:124.5px;" width="25.0" height="25.0" viewBox="0 0 25.0 25.0"><circle cx="12.5" cy="12.5" r="11.5" fill="#fff" stroke="#2f6fb5" stroke-width="2"/><path d="M5.3125 10.295833333333334h7.1875v-4.3125l7.1875 6.516666666666667 -7.1875 6.516666666666667v-4.3125h-7.1875z" fill="#2f6fb5"/></svg>
<span id="t86" style="top:149.0px;font-size:12px;line-height:16px;color:#000;white-space:nowrap;letter-spacing:-0.370px;left:1375.00px;">Successivo</span>
<div style="left:805px;top:171px;width:634px;height:150px;background:#fff;"></div>
<svg style="left:815px;top:172px;" width="60" height="60" viewBox="0 0 60 60"><path d="M27.400 8L31.200 23L31.400 17Q36.500 22 38.200 31L40 27l2 3.800L36 40L30.600 54.500Q22 55.500 16.500 47L9.500 34L15.300 36.400L13 25.100L18.500 28.800L18.500 16.400L23.700 19.600z" fill="#e8845c"/><path d="M26.500 32L24 37L23 35.500L22 40L20.800 39L20.500 43.500L19 43Q21 50 29 52.500L36 45L28.500 36z" fill="#fff"/><circle cx="39" cy="44" r="12.200" fill="#fff"/></svg>
<svg style="left:843px;top:205px;" width="22" height="22" viewBox="0 0 22 22"><circle cx="11" cy="11" r="11" fill="#4fa882"/><path d="M5.041666666666667 11.458333333333334l4.125 4.125 7.333333333333333 -8.25" fill="none" stroke="#fff" stroke-width="2.9333333333333336"/></svg>
<span id="t87" style="top:245.5px;font-size:12px;line-height:16px;color:#000;white-space:nowrap;letter-spacing:-0.450px;left:817px;">Scheda: 1</span>
<div style="left:884px;top:174px;width:551px;height:25px;background:#f5f6f7;"></div>
<svg style="left:888px;top:178px;" width="3" height="16" viewBox="0 0 3 16"><rect x="1" y="1" width="2" height="2" fill="#fff"/><rect x="0" y="0" width="2" height="2" fill="#a6a6a6"/><rect x="1" y="5" width="2" height="2" fill="#fff"/><rect x="0" y="4" width="2" height="2" fill="#a6a6a6"/><rect x="1" y="9" width="2" height="2" fill="#fff"/><rect x="0" y="8" width="2" height="2" fill="#a6a6a6"/><rect x="1" y="13" width="2" height="2" fill="#fff"/><rect x="0" y="12" width="2" height="2" fill="#a6a6a6"/></svg>
<div style="left:894px;top:175px;width:149px;height:22px;background:#fff;"></div>
<div style="left:1030px;top:175px;width:13px;height:22px;background:#f5f6f7;"></div>
<span id="t88" style="top:177.5px;font-size:12px;line-height:16px;color:#000;white-space:nowrap;letter-spacing:0.049px;left:897px;">Tahoma</span>
<svg style="left:1033px;top:184px;" width="7" height="4" viewBox="0 0 7 4"><path d="M0.500 0h6l-3 3.300z" fill="#000"/></svg>
<div style="left:1046px;top:175px;width:74px;height:22px;background:#fff;"></div>
<div style="left:1107px;top:175px;width:13px;height:22px;background:#f5f6f7;"></div>
<span id="t89" style="top:177.5px;font-size:12px;line-height:16px;color:#000;white-space:nowrap;letter-spacing:0.312px;left:1049px;">8</span>
<svg style="left:1110.5px;top:184px;" width="7" height="4" viewBox="0 0 7 4"><path d="M0.500 0h6l-3 3.300z" fill="#000"/></svg>
<div style="left:1125px;top:178px;width:1px;height:17px;background:#d4d4d4;"></div>
<span id="t90" style="top:177.0px;font-size:14px;line-height:18px;color:#000;white-space:nowrap;font-family:'Liberation Serif',serif;font-weight:700;left:1133.83px;">B</span>
<span id="t91" style="top:177.0px;font-size:14px;line-height:18px;color:#000;white-space:nowrap;font-family:'Liberation Serif',serif;font-weight:700;font-style:italic;left:1157.77px;">I</span>
<span id="t92" style="top:177.0px;font-size:13px;line-height:17px;color:#000;white-space:nowrap;font-family:'Liberation Serif',serif;font-weight:700;text-decoration:underline;left:1179.80px;">U</span>
<div style="left:1200px;top:178px;width:1px;height:17px;background:#d4d4d4;"></div>
<svg style="left:1207px;top:180px;" width="14" height="12" viewBox="0 0 14 12"><rect x="0" y="0.0" width="14" height="1.200" fill="#111"/><rect x="0" y="2.5" width="10" height="1.200" fill="#111"/><rect x="0" y="5.0" width="14" height="1.200" fill="#111"/><rect x="0" y="7.5" width="10" height="1.200" fill="#111"/><rect x="0" y="10.0" width="14" height="1.200" fill="#111"/></svg>
<svg style="left:1230px;top:180px;" width="14" height="12" viewBox="0 0 14 12"><rect x="0.0" y="0.0" width="14" height="1.200" fill="#111"/><rect x="2.0" y="2.5" width="10" height="1.200" fill="#111"/><rect x="0.0" y="5.0" width="14" height="1.200" fill="#111"/><rect x="2.0" y="7.5" width="10" height="1.200" fill="#111"/><rect x="0.0" y="10.0" width="14" height="1.200" fill="#111"/></svg>
<svg style="left:1253px;top:180px;" width="14" height="12" viewBox="0 0 14 12"><rect x="0" y="0.0" width="14" height="1.200" fill="#111"/><rect x="4" y="2.5" width="10" height="1.200" fill="#111"/><rect x="0" y="5.0" width="14" height="1.200" fill="#111"/><rect x="4" y="7.5" width="10" height="1.200" fill="#111"/><rect x="0" y="10.0" width="14" height="1.200" fill="#111"/></svg>
<div style="left:1272px;top:175px;width:23px;height:22px;background:#d9d9d9;border:1px solid #bcbcbc;box-sizing:border-box;"></div>
<svg style="left:1276.5px;top:180px;" width="14" height="12" viewBox="0 0 14 12"><rect x="0" y="0.0" width="14" height="1.200" fill="#111"/><rect x="0" y="2.5" width="14" height="1.200" fill="#111"/><rect x="0" y="5.0" width="14" height="1.200" fill="#111"/><rect x="0" y="7.5" width="14" height="1.200" fill="#111"/><rect x="0" y="10.0" width="14" height="1.200" fill="#111"/></svg>
<div style="left:1298px;top:178px;width:1px;height:17px;background:#d4d4d4;"></div>
<svg style="left:1305px;top:180px;" width="14" height="13" viewBox="0 0 14 13"><circle cx="1.500" cy="1.5" r="1.400" fill="#2f4fa0"/><rect x="5" y="1" width="9" height="1.200" fill="#111"/><circle cx="1.500" cy="6.5" r="1.400" fill="#2f4fa0"/><rect x="5" y="6" width="9" height="1.200" fill="#111"/><circle cx="1.500" cy="11.5" r="1.400" fill="#2f4fa0"/><rect x="5" y="11" width="9" height="1.200" fill="#111"/></svg>
<svg style="left:1327px;top:179px;" width="15" height="15" viewBox="0 0 15 15"><text x="0" y="5" font-size="5.500" font-weight="700" fill="#2f4fa0" font-family="Liberation Sans">1</text><rect x="5.500" y="2.5" width="9" height="1.200" fill="#111"/><text x="0" y="10" font-size="5.500" font-weight="700" fill="#2f4fa0" font-family="Liberation Sans">2</text><rect x="5.500" y="7.5" width="9" height="1.200" fill="#111"/><text x="0" y="15" font-size="5.500" font-weight="700" fill="#2f4fa0" font-family="Liberation Sans">3</text><rect x="5.500" y="12.5" width="9" height="1.200" fill="#111"/></svg>
<svg style="left:1347.5px;top:184px;" width="7" height="4" viewBox="0 0 7 4"><path d="M0.500 0h6l-3 3.300z" fill="#000"/></svg>
<div style="left:1359px;top:178px;width:1px;height:17px;background:#d4d4d4;"></div>
<span id="t93" style="top:175.5px;font-size:17px;line-height:21px;color:#2f4f9a;white-space:nowrap;font-family:'Liberation Serif',serif;font-weight:700;left:1366.36px;">A</span>
<span id="t94" style="top:173.5px;font-size:17px;line-height:21px;color:#2f4f9a;white-space:nowrap;font-family:'Liberation Serif',serif;font-weight:700;left:1389.86px;">A</span>
<div style="left:1388px;top:191px;width:16px;height:3px;background:#f0501e;"></div>
<div style="left:1411px;top:178px;width:1px;height:17px;background:#d4d4d4;"></div>
<svg style="left:1424px;top:188px;" width="9" height="10" viewBox="0 0 9 10"><rect x="0" y="0" width="9" height="10" fill="#c8c8c8"/><rect x="2" y="2" width="5" height="1.200" fill="#000"/><path d="M1.500 5h6l-3 3.500z" fill="#000"/></svg>
<span id="t95" style="top:198.0px;font-size:11px;line-height:15px;color:#000;white-space:nowrap;letter-spacing:-0.195px;left:884px;">Pericoilo di investimentol</span>
<div style="left:805px;top:321px;width:634px;height:28px;background:#f0f0f0;"></div>
<div style="left:805px;top:349px;width:634px;height:1px;background:#9a9a9a;"></div>
<div style="left:805px;top:350px;width:634px;height:1px;background:#e2e2e2;"></div>
<div style="left:805px;top:326px;width:63px;height:24px;background:#f7f7f8;border:1px solid #d4d4d4;border-bottom:none;box-sizing:border-box;"></div>
<svg style="left:809px;top:330px;" width="15" height="16" viewBox="0 0 15 16"><rect x="0.500" y="0.500" width="14" height="15" fill="#fff" stroke="#555"/><rect x="0" y="0" width="15" height="3" fill="#2f6fb5"/><rect x="2.500" y="5.0" width="1.500" height="1.200" fill="#555"/><rect x="5" y="5.0" width="7.500" height="1.200" fill="#555"/><rect x="2.500" y="7.5" width="1.500" height="1.200" fill="#555"/><rect x="5" y="7.5" width="7.500" height="1.200" fill="#555"/><rect x="2.500" y="10.0" width="1.500" height="1.200" fill="#555"/><rect x="5" y="10.0" width="7.500" height="1.200" fill="#555"/><rect x="2.500" y="12.5" width="1.500" height="1.200" fill="#555"/><rect x="5" y="12.5" width="7.500" height="1.200" fill="#555"/></svg>
<span id="t96" style="top:329.5px;font-size:12px;line-height:16px;color:#000;white-space:nowrap;letter-spacing:-0.615px;left:827px;">AR-001</span>
<svg style="left:1277px;top:329px;" width="17" height="16" viewBox="0 0 17 16"><rect x="0.500" y="0.500" width="13" height="14" fill="#fff" stroke="#666"/><rect x="0" y="0" width="14" height="3" fill="#2f6fb5"/><rect x="2.500" y="5.0" width="1.500" height="1.200" fill="#666"/><rect x="5" y="5.0" width="6" height="1.200" fill="#666"/><rect x="2.500" y="7.5" width="1.500" height="1.200" fill="#666"/><rect x="5" y="7.5" width="6" height="1.200" fill="#666"/><rect x="2.500" y="10.0" width="1.500" height="1.200" fill="#666"/><rect x="5" y="10.0" width="6" height="1.200" fill="#666"/><circle cx="11.500" cy="11.500" r="4.500" fill="#3d9b6e"/><path d="M11.500 9v5M9 11.500h5" stroke="#fff" stroke-width="1.300"/></svg>
<span id="t97" style="top:329.0px;font-size:12px;line-height:16px;color:#000;white-space:nowrap;letter-spacing:0.285px;left:1296px;">Aggiungi</span>
<svg style="left:1353px;top:329px;" width="16" height="16" viewBox="0 0 16 16"><path d="M2 15.500a1.800 1.800 0 01-1.300-3l7.300-7.300a4.500 4.500 0 015.500-5l-2.800 2.800 0.800 2.200 2.200 0.800 2.800-2.800a4.500 4.500 0 01-5.200 5.500l-7.300 7.300a1.800 1.800 0 01-2 -0.500z" fill="#7a7a7a"/></svg>
<span id="t98" style="top:329.0px;font-size:12px;line-height:16px;color:#000;white-space:nowrap;letter-spacing:0.071px;left:1372px;">Strumenti</span>
<svg style="left:1429px;top:336px;" width="7" height="4" viewBox="0 0 7 4"><path d="M0.500 0h6l-3 3.300z" fill="#000"/></svg>
<div style="left:805px;top:351px;width:618px;height:617px;background:#fff;"></div>
<div style="left:1423px;top:351px;width:16px;height:617px;background:#f0f0f0;"></div>
<div style="left:1423px;top:577px;width:15px;height:193px;background:#cdcdcd;"></div>
<svg style="left:1426px;top:356px;" width="9" height="7" viewBox="0 0 9 7"><path d="M0.800 5.500l3.700-4 3.700 4" fill="none" stroke="#404040" stroke-width="2"/></svg>
<svg style="left:1426px;top:957px;" width="9" height="7" viewBox="0 0 9 7"><path d="M0.800 1l3.700 4 3.700-4" fill="none" stroke="#404040" stroke-width="2"/></svg>
<svg style="left:808px;top:354.0px;" width="17" height="17" viewBox="0 0 17 17"><circle cx="8.500" cy="8.500" r="8.300" fill="#a8a8a8"/><text x="8.500" y="13" font-size="13" font-weight="700" fill="#fff" text-anchor="middle" font-family="Liberation Sans">?</text></svg>
<svg style="left:829px;top:359.0px;" width="9" height="9" viewBox="0 0 9 9"><rect x="0.500" y="0.500" width="8" height="8" fill="#fff" stroke="#919191"/><path d="M2 4.500h5" stroke="#000"/></svg>
<span id="t99" style="top:354.5px;font-size:12px;line-height:16px;color:#000;white-space:nowrap;font-weight:700;letter-spacing:-0.028px;left:843px;">Misure di protezione integrate nella progettazione</span>
<div style="left:841px;top:372px;width:581px;height:1px;background:#d8d8d8;"></div>
<svg style="left:1390px;top:356.5px;" width="12" height="10" viewBox="0 0 12 10"><path d="M1 5.500v-2a2.500 2.500 0 015 0" fill="none" stroke="#000" stroke-width="1.400"/><rect x="3.500" y="4" width="8" height="6" rx="0.800" fill="#000"/><rect x="6.500" y="6" width="2" height="1.500" fill="#888"/></svg>
<svg style="left:1408px;top:356.5px;" width="12" height="10" viewBox="0 0 12 10"><rect x="2.500" y="0.500" width="7" height="3" fill="#fff" stroke="#909090"/><rect x="0.500" y="3.500" width="11" height="4.500" rx="1" fill="#fff" stroke="#909090"/><rect x="2.500" y="6.500" width="7" height="3" fill="#fff" stroke="#909090"/></svg>
<span id="t100" style="top:372.5px;font-size:11px;line-height:15px;color:#000;white-space:nowrap;letter-spacing:-0.059px;left:840px;">Misure di protezione integrate nella progettazione</span>
<span id="t101" style="top:398.0px;font-size:12px;line-height:16px;color:#c4c4c4;white-space:nowrap;font-style:italic;letter-spacing:-0.031px;left:985.50px;">Fai doppio click qui per inserire un'immagine allegata...</span>
<svg style="left:808px;top:420.0px;" width="17" height="17" viewBox="0 0 17 17"><circle cx="8.500" cy="8.500" r="8.300" fill="#a8a8a8"/><text x="8.500" y="13" font-size="13" font-weight="700" fill="#fff" text-anchor="middle" font-family="Liberation Sans">?</text></svg>
<svg style="left:829px;top:425.0px;" width="9" height="9" viewBox="0 0 9 9"><rect x="0.500" y="0.500" width="8" height="8" fill="#fff" stroke="#919191"/><path d="M2 4.500h5" stroke="#000"/></svg>
<span id="t102" style="top:420.5px;font-size:12px;line-height:16px;color:#000;white-space:nowrap;font-weight:700;letter-spacing:-0.002px;left:843px;">Protezioni</span>
<div style="left:841px;top:438px;width:581px;height:1px;background:#d8d8d8;"></div>
<svg style="left:1390px;top:422.5px;" width="12" height="10" viewBox="0 0 12 10"><path d="M1 5.500v-2a2.500 2.500 0 015 0" fill="none" stroke="#000" stroke-width="1.400"/><rect x="3.500" y="4" width="8" height="6" rx="0.800" fill="#000"/><rect x="6.500" y="6" width="2" height="1.500" fill="#888"/></svg>
<svg style="left:1408px;top:422.5px;" width="12" height="10" viewBox="0 0 12 10"><rect x="2.500" y="0.500" width="7" height="3" fill="#fff" stroke="#909090"/><rect x="0.500" y="3.500" width="11" height="4.500" rx="1" fill="#fff" stroke="#909090"/><rect x="2.500" y="6.500" width="7" height="3" fill="#fff" stroke="#909090"/></svg>
<span id="t103" style="top:442.0px;font-size:12px;line-height:16px;color:#c4c4c4;white-space:nowrap;font-style:italic;letter-spacing:-0.112px;left:984.00px;">Fai doppio click qui per modificare il campo 'Protezioni'...</span>
<div style="left:841px;top:461px;width:581px;height:184px;background:#e6e6fa;"></div>
<div style="left:844px;top:464px;width:150px;height:150px;background:#fff;"></div>
<div style="left:1000px;top:464px;width:150px;height:150px;background:#fff;"></div>
<svg style="left:844px;top:490px;" width="150" height="98" viewBox="0 0 150 98"><use href="#img1"/></svg>
<svg style="left:1000px;top:490px;" width="150" height="98" viewBox="0 0 150 98"><use href="#img2"/></svg>
<span id="t104" style="top:613.5px;font-size:11px;line-height:15px;color:#000;white-space:nowrap;letter-spacing:0.161px;left:846px;">Fig. 1: Immagine 1</span>
<span id="t105" style="top:613.5px;font-size:11px;line-height:15px;color:#000;white-space:nowrap;letter-spacing:0.161px;left:1002px;">Fig. 2: Immagine 2</span>
<svg style="left:808px;top:648.0px;" width="17" height="17" viewBox="0 0 17 17"><circle cx="8.500" cy="8.500" r="8.300" fill="#a8a8a8"/><text x="8.500" y="13" font-size="13" font-weight="700" fill="#fff" text-anchor="middle" font-family="Liberation Sans">?</text></svg>
<svg style="left:829px;top:653.0px;" width="9" height="9" viewBox="0 0 9 9"><rect x="0.500" y="0.500" width="8" height="8" fill="#fff" stroke="#919191"/><path d="M2 4.500h5" stroke="#000"/></svg>
<span id="t106" style="top:648.5px;font-size:12px;line-height:16px;color:#000;white-space:nowrap;font-weight:700;letter-spacing:-0.040px;left:843px;">Misure di protezione complementari</span>
<div style="left:841px;top:666px;width:581px;height:1px;background:#d8d8d8;"></div>
<svg style="left:1390px;top:650.5px;" width="12" height="10" viewBox="0 0 12 10"><path d="M1 5.500v-2a2.500 2.500 0 015 0" fill="none" stroke="#000" stroke-width="1.400"/><rect x="3.500" y="4" width="8" height="6" rx="0.800" fill="#000"/><rect x="6.500" y="6" width="2" height="1.500" fill="#888"/></svg>
<svg style="left:1408px;top:650.5px;" width="12" height="10" viewBox="0 0 12 10"><rect x="2.500" y="0.500" width="7" height="3" fill="#fff" stroke="#909090"/><rect x="0.500" y="3.500" width="11" height="4.500" rx="1" fill="#fff" stroke="#909090"/><rect x="2.500" y="6.500" width="7" height="3" fill="#fff" stroke="#909090"/></svg>
<span id="t107" style="top:666.5px;font-size:11px;line-height:15px;color:#000;white-space:nowrap;letter-spacing:-0.214px;left:840px;">Protezioni complementari</span>
<span id="t108" style="top:692.0px;font-size:12px;line-height:16px;color:#c4c4c4;white-space:nowrap;font-style:italic;letter-spacing:-0.031px;left:985.50px;">Fai doppio click qui per inserire un'immagine allegata...</span>
<svg style="left:808px;top:714.0px;" width="17" height="17" viewBox="0 0 17 17"><circle cx="8.500" cy="8.500" r="8.300" fill="#a8a8a8"/><text x="8.500" y="13" font-size="13" font-weight="700" fill="#fff" text-anchor="middle" font-family="Liberation Sans">?</text></svg>
<svg style="left:829px;top:719.0px;" width="9" height="9" viewBox="0 0 9 9"><rect x="0.500" y="0.500" width="8" height="8" fill="#fff" stroke="#919191"/><path d="M2 4.500h5" stroke="#000"/></svg>
<span id="t109" style="top:714.5px;font-size:12px;line-height:16px;color:#000;white-space:nowrap;font-weight:700;letter-spacing:-0.258px;left:843px;">Indicazioni istruzioni</span>
<div style="left:841px;top:732px;width:581px;height:1px;background:#d8d8d8;"></div>
<svg style="left:1390px;top:716.5px;" width="12" height="10" viewBox="0 0 12 10"><path d="M1 5.500v-2a2.500 2.500 0 015 0" fill="none" stroke="#000" stroke-width="1.400"/><rect x="3.500" y="4" width="8" height="6" rx="0.800" fill="#000"/><rect x="6.500" y="6" width="2" height="1.500" fill="#888"/></svg>
<svg style="left:1408px;top:716.5px;" width="12" height="10" viewBox="0 0 12 10"><rect x="2.500" y="0.500" width="7" height="3" fill="#fff" stroke="#909090"/><rect x="0.500" y="3.500" width="11" height="4.500" rx="1" fill="#fff" stroke="#909090"/><rect x="2.500" y="6.500" width="7" height="3" fill="#fff" stroke="#909090"/></svg>
<span id="t110" style="top:732.5px;font-size:11px;line-height:15px;color:#000;white-space:nowrap;letter-spacing:-0.003px;left:840px;">Istruzioni</span>
<span id="t111" style="top:758.0px;font-size:12px;line-height:16px;color:#c4c4c4;white-space:nowrap;font-style:italic;letter-spacing:-0.031px;left:985.50px;">Fai doppio click qui per inserire un'immagine allegata...</span>
<svg style="left:808px;top:780.0px;" width="17" height="17" viewBox="0 0 17 17"><circle cx="8.500" cy="8.500" r="8.300" fill="#a8a8a8"/><text x="8.500" y="13" font-size="13" font-weight="700" fill="#fff" text-anchor="middle" font-family="Liberation Sans">?</text></svg>
<svg style="left:829px;top:785.0px;" width="9" height="9" viewBox="0 0 9 9"><rect x="0.500" y="0.500" width="8" height="8" fill="#fff" stroke="#919191"/><path d="M2 4.500h5" stroke="#000"/></svg>
<span id="t112" style="top:780.5px;font-size:12px;line-height:16px;color:#000;white-space:nowrap;font-weight:700;letter-spacing:-0.246px;left:843px;">Segnaletica</span>
<div style="left:841px;top:798px;width:581px;height:1px;background:#d8d8d8;"></div>
<svg style="left:1390px;top:782.5px;" width="12" height="10" viewBox="0 0 12 10"><path d="M1 5.500v-2a2.500 2.500 0 015 0" fill="none" stroke="#000" stroke-width="1.400"/><rect x="3.500" y="4" width="8" height="6" rx="0.800" fill="#000"/><rect x="6.500" y="6" width="2" height="1.500" fill="#888"/></svg>
<svg style="left:1408px;top:782.5px;" width="12" height="10" viewBox="0 0 12 10"><rect x="2.500" y="0.500" width="7" height="3" fill="#fff" stroke="#909090"/><rect x="0.500" y="3.500" width="11" height="4.500" rx="1" fill="#fff" stroke="#909090"/><rect x="2.500" y="6.500" width="7" height="3" fill="#fff" stroke="#909090"/></svg>
<div style="left:844px;top:802px;width:64px;height:64px;background:#fff;border:1px solid #e4e4e4;box-sizing:border-box;border-radius:2px;"></div>
<div style="left:914px;top:802px;width:64px;height:64px;background:#fff;border:1px solid #e4e4e4;box-sizing:border-box;border-radius:2px;"></div>
<div style="left:984px;top:802px;width:64px;height:64px;background:#fff;border:1px solid #e4e4e4;box-sizing:border-box;border-radius:2px;"></div>
<svg style="left:846px;top:804px;" width="60" height="60" viewBox="0 0 60 60"><defs><clipPath id="cm1"><path d="M30.500 6.500A23.500 23.500 0 0 1 46 47.500L34 54L30.500 53.500z"/></clipPath></defs><circle cx="30.300" cy="30" r="26.200" fill="#fff" stroke="#e0301e" stroke-width="6.400"/><g clip-path="url(#cm1)"><rect x="30" y="4" width="24" height="52" fill="#fff"/><path d="M22.8 4l-30 52M0.8000000000000007 4l30 52" stroke="#222" stroke-width="0.700"/><path d="M26.4 4l-30 52M4.399999999999999 4l30 52" stroke="#222" stroke-width="0.700"/><path d="M30.0 4l-30 52M8.0 4l30 52" stroke="#222" stroke-width="0.700"/><path d="M33.6 4l-30 52M11.600000000000001 4l30 52" stroke="#222" stroke-width="0.700"/><path d="M37.2 4l-30 52M15.200000000000003 4l30 52" stroke="#222" stroke-width="0.700"/><path d="M40.8 4l-30 52M18.799999999999997 4l30 52" stroke="#222" stroke-width="0.700"/><path d="M44.4 4l-30 52M22.4 4l30 52" stroke="#222" stroke-width="0.700"/><path d="M48.0 4l-30 52M26.0 4l30 52" stroke="#222" stroke-width="0.700"/><path d="M51.6 4l-30 52M29.6 4l30 52" stroke="#222" stroke-width="0.700"/><path d="M55.2 4l-30 52M33.2 4l30 52" stroke="#222" stroke-width="0.700"/><path d="M58.8 4l-30 52M36.8 4l30 52" stroke="#222" stroke-width="0.700"/><path d="M62.4 4l-30 52M40.4 4l30 52" stroke="#222" stroke-width="0.700"/><path d="M66.0 4l-30 52M44.0 4l30 52" stroke="#222" stroke-width="0.700"/><path d="M69.6 4l-30 52M47.599999999999994 4l30 52" stroke="#222" stroke-width="0.700"/><path d="M73.2 4l-30 52M51.2 4l30 52" stroke="#222" stroke-width="0.700"/><path d="M76.80000000000001 4l-30 52M54.80000000000001 4l30 52" stroke="#222" stroke-width="0.700"/></g><path d="M44.47 23.75 L44.47 25.25 L41.81 26.13 L41.47 27.18 L43.10 29.46 L42.22 30.67 L39.55 29.82 L38.66 30.47 L38.64 33.28 L37.22 33.74 L35.55 31.48 L34.45 31.48 L32.78 33.74 L31.36 33.28 L31.34 30.47 L30.45 29.82 L27.78 30.67 L26.90 29.46 L28.53 27.18 L28.19 26.13 L25.53 25.25 L25.53 23.75 L28.19 22.87 L28.53 21.82 L26.90 19.54 L27.78 18.33 L30.45 19.18 L31.34 18.53 L31.36 15.72 L32.78 15.26 L34.45 17.52 L35.55 17.52 L37.22 15.26 L38.64 15.72 L38.66 18.53 L39.55 19.18 L42.22 18.33 L43.10 19.54 L41.47 21.82 L41.81 22.87z" fill="#111"/><circle cx="35" cy="24.5" r="3" fill="#fff"/><path d="M28.07 37.85 L28.07 39.15 L25.90 39.84 L25.56 40.67 L26.60 42.69 L25.69 43.60 L23.67 42.56 L22.84 42.90 L22.15 45.07 L20.85 45.07 L20.16 42.90 L19.33 42.56 L17.31 43.60 L16.40 42.69 L17.44 40.67 L17.10 39.84 L14.93 39.15 L14.93 37.85 L17.10 37.16 L17.44 36.33 L16.40 34.31 L17.31 33.40 L19.33 34.44 L20.16 34.10 L20.85 31.93 L22.15 31.93 L22.84 34.10 L23.67 34.44 L25.69 33.40 L26.60 34.31 L25.56 36.33 L25.90 37.16z" fill="#111"/><circle cx="21.5" cy="38.5" r="2.2" fill="#fff"/><path d="M12.500 12l36 36" stroke="#e0301e" stroke-width="6"/></svg>
<svg style="left:916px;top:804px;" width="60" height="60" viewBox="0 0 60 60"><defs><clipPath id="cm2"><circle cx="30" cy="30" r="28"/></clipPath></defs><circle cx="30" cy="30" r="30" fill="#1e8fdc"/><path d="M34.500 11.500h3.500Q39.500 24.500 52 24.500v11.500Q39.500 36 38 48.500h-3.500z" fill="#fff"/><g clip-path="url(#cm2)"><path d="M35.13 22.58A14 14 0 0 0 35.13 37.42" fill="none" stroke="#fff" stroke-width="1.150"/><path d="M31.74 20.46A18 18 0 0 0 31.74 39.54" fill="none" stroke="#fff" stroke-width="1.150"/><path d="M28.34 18.34A22 22 0 0 0 28.34 41.66" fill="none" stroke="#fff" stroke-width="1.150"/><path d="M24.95 16.22A26 26 0 0 0 24.95 43.78" fill="none" stroke="#fff" stroke-width="1.150"/><path d="M21.56 14.10A30 30 0 0 0 21.56 45.90" fill="none" stroke="#fff" stroke-width="1.150"/><path d="M18.17 11.98A34 34 0 0 0 18.17 48.02" fill="none" stroke="#fff" stroke-width="1.150"/><path d="M14.77 9.86A38 38 0 0 0 14.77 50.14" fill="none" stroke="#fff" stroke-width="1.150"/></g></svg>
<svg style="left:986px;top:804px;" width="60" height="60" viewBox="0 0 60 60"><circle cx="30.300" cy="30" r="26.200" fill="#fff" stroke="#e0301e" stroke-width="6.400"/><text x="30.500" y="26.500" font-size="5.200" font-weight="700" text-anchor="middle" fill="#111" font-family="Liberation Sans">MACCHINA</text><text x="30.500" y="33" font-size="4" font-weight="700" text-anchor="middle" fill="#111" font-family="Liberation Sans">IN</text><text x="30.500" y="40" font-size="4.600" font-weight="700" text-anchor="middle" fill="#111" font-family="Liberation Sans">MANUTENZIONE</text><path d="M12.500 12l36 36" stroke="#e0301e" stroke-width="6"/></svg>
<span id="t113" style="top:866.0px;font-size:11px;line-height:15px;color:#000;white-space:nowrap;letter-spacing:0.143px;left:846px;">2.1.1 - Non</span>
<span id="t114" style="top:878.5px;font-size:11px;line-height:15px;color:#000;white-space:nowrap;letter-spacing:0.054px;left:846px;">rimuovere i</span>
<span id="t115" style="top:891.0px;font-size:11px;line-height:15px;color:#000;white-space:nowrap;letter-spacing:0.121px;left:846px;">dispositivi di</span>
<span id="t116" style="top:903.5px;font-size:11px;line-height:15px;color:#000;white-space:nowrap;letter-spacing:-0.163px;left:846px;">sicurezza</span>
<span id="t117" style="top:866.0px;font-size:11px;line-height:15px;color:#000;white-space:nowrap;letter-spacing:-0.170px;left:916px;">3.1.1 -</span>
<span id="t118" style="top:878.5px;font-size:11px;line-height:15px;color:#000;white-space:nowrap;letter-spacing:-0.017px;left:916px;">Segnalare</span>
<span id="t119" style="top:891.0px;font-size:11px;line-height:15px;color:#000;white-space:nowrap;letter-spacing:0.109px;left:916px;">prima di</span>
<span id="t120" style="top:903.5px;font-size:11px;line-height:15px;color:#000;white-space:nowrap;letter-spacing:-0.006px;left:916px;">mettere in...</span>
<span id="t121" style="top:866.0px;font-size:11px;line-height:15px;color:#000;white-space:nowrap;letter-spacing:-0.039px;left:986px;">2.1.10 -</span>
<span id="t122" style="top:878.5px;font-size:11px;line-height:15px;color:#000;white-space:nowrap;letter-spacing:-0.155px;left:986px;">Macchina in</span>
<span id="t123" style="top:891.0px;font-size:11px;line-height:15px;color:#000;white-space:nowrap;letter-spacing:0.013px;left:986px;">manutenzio</span>
<span id="t124" style="top:903.5px;font-size:11px;line-height:15px;color:#000;white-space:nowrap;letter-spacing:-0.125px;left:986px;">ne</span>
<svg style="left:808px;top:936.0px;" width="17" height="17" viewBox="0 0 17 17"><circle cx="8.500" cy="8.500" r="8.300" fill="#a8a8a8"/><text x="8.500" y="13" font-size="13" font-weight="700" fill="#fff" text-anchor="middle" font-family="Liberation Sans">?</text></svg>
<svg style="left:829px;top:941.0px;" width="9" height="9" viewBox="0 0 9 9"><rect x="0.500" y="0.500" width="8" height="8" fill="#fff" stroke="#919191"/><path d="M2 4.500h5" stroke="#000"/></svg>
<span id="t125" style="top:936.5px;font-size:12px;line-height:16px;color:#000;white-space:nowrap;font-weight:700;letter-spacing:-0.238px;left:843px;">Stima del rischio finale</span>
<div style="left:841px;top:954px;width:581px;height:1px;background:#d8d8d8;"></div>
<svg style="left:1390px;top:938.5px;" width="12" height="10" viewBox="0 0 12 10"><path d="M1 5.500v-2a2.500 2.500 0 015 0" fill="none" stroke="#000" stroke-width="1.400"/><rect x="3.500" y="4" width="8" height="6" rx="0.800" fill="#000"/><rect x="6.500" y="6" width="2" height="1.500" fill="#888"/></svg>
<svg style="left:1408px;top:938.5px;" width="12" height="10" viewBox="0 0 12 10"><rect x="2.500" y="0.500" width="7" height="3" fill="#fff" stroke="#909090"/><rect x="0.500" y="3.500" width="11" height="4.500" rx="1" fill="#fff" stroke="#909090"/><rect x="2.500" y="6.500" width="7" height="3" fill="#fff" stroke="#909090"/></svg>
<span id="t126" style="top:954.5px;font-size:11px;line-height:15px;color:#000;white-space:nowrap;letter-spacing:0.096px;left:843px;">(Singolo operatore)</span>
<span id="t127" style="top:954.5px;font-size:11px;line-height:15px;color:#000;white-space:nowrap;letter-spacing:0.027px;left:1211.00px;">ISO/TR 14121-2:2013 p. 6.5 Metodo ibrido</span>
<div style="left:805px;top:968px;width:634px;height:46px;background:#f5f6f7;"></div>
<svg style="left:808px;top:972px;" width="3" height="38" viewBox="0 0 3 38"><rect x="1" y="1" width="2" height="2" fill="#fff"/><rect x="0" y="0" width="2" height="2" fill="#a6a6a6"/><rect x="1" y="5" width="2" height="2" fill="#fff"/><rect x="0" y="4" width="2" height="2" fill="#a6a6a6"/><rect x="1" y="9" width="2" height="2" fill="#fff"/><rect x="0" y="8" width="2" height="2" fill="#a6a6a6"/><rect x="1" y="13" width="2" height="2" fill="#fff"/><rect x="0" y="12" width="2" height="2" fill="#a6a6a6"/><rect x="1" y="17" width="2" height="2" fill="#fff"/><rect x="0" y="16" width="2" height="2" fill="#a6a6a6"/><rect x="1" y="21" width="2" height="2" fill="#fff"/><rect x="0" y="20" width="2" height="2" fill="#a6a6a6"/><rect x="1" y="25" width="2" height="2" fill="#fff"/><rect x="0" y="24" width="2" height="2" fill="#a6a6a6"/><rect x="1" y="29" width="2" height="2" fill="#fff"/><rect x="0" y="28" width="2" height="2" fill="#a6a6a6"/><rect x="1" y="33" width="2" height="2" fill="#fff"/><rect x="0" y="32" width="2" height="2" fill="#a6a6a6"/></svg>
<svg style="left:834px;top:970px;" width="24" height="24" viewBox="0 0 24 24"><circle cx="12" cy="12" r="12" fill="#4fa882"/><path d="M5.5 12.5l4.5 4.5 8.0 -9.0" fill="none" stroke="#fff" stroke-width="3.2"/></svg>
<span id="t128" style="top:995.0px;font-size:12px;line-height:16px;color:#000;white-space:nowrap;letter-spacing:0.164px;left:819.00px;">Conforme</span>
<svg style="left:877.5px;top:988px;" width="7" height="4" viewBox="0 0 7 4"><path d="M0.500 0h6l-3 3.300z" fill="#000"/></svg>
<svg style="left:1267px;top:971px;" width="24" height="24" viewBox="0 0 24 24"><rect x="3" y="3" width="18" height="20" rx="2" fill="#fff" stroke="#3b76b8" stroke-width="2"/><rect x="5" y="0.800" width="2" height="3.600" rx="1" fill="#eee" stroke="#999" stroke-width="0.600"/><rect x="8.5" y="0.800" width="2" height="3.600" rx="1" fill="#eee" stroke="#999" stroke-width="0.600"/><rect x="12" y="0.800" width="2" height="3.600" rx="1" fill="#eee" stroke="#999" stroke-width="0.600"/><rect x="15.5" y="0.800" width="2" height="3.600" rx="1" fill="#eee" stroke="#999" stroke-width="0.600"/><rect x="18.5" y="0.800" width="2" height="3.600" rx="1" fill="#eee" stroke="#999" stroke-width="0.600"/><path d="M9 8h9M9 10.500h9M9 13h9M13 15.500h5M14 19h2l1-1.500 1 2 1-0.500" fill="none" stroke="#999" stroke-width="0.900"/><path d="M0.800 9.500l2.500-2.500 10.500 11.500 0.800 3.500-3.300-1z" fill="#3b76b8" stroke="#fff" stroke-width="0.900"/></svg>
<span id="t129" style="top:995.0px;font-size:12px;line-height:16px;color:#000;white-space:nowrap;letter-spacing:-0.002px;left:1243.00px;">Firma tecnico</span>
<svg style="left:1319.5px;top:988px;" width="7" height="4" viewBox="0 0 7 4"><path d="M0.500 0h6l-3 3.300z" fill="#000"/></svg>
<svg style="left:1367px;top:971px;" width="24" height="24" viewBox="0 0 24 24"><rect x="0.750" y="7" width="22.500" height="16" fill="#fff" stroke="#808080" stroke-width="1.500"/><rect x="0" y="2" width="24" height="6.500" fill="#3b76b8"/><rect x="5" y="0" width="1.800" height="5" fill="#808080"/><rect x="17" y="0" width="1.800" height="5" fill="#808080"/><path d="M9.500 10.500h11v11h-17v-7.300h17M9.500 10.500v11M15 10.500v11M3.500 18h17" fill="none" stroke="#909090" stroke-width="1.100"/></svg>
<span id="t130" style="top:995.0px;font-size:12px;line-height:16px;color:#000;white-space:nowrap;letter-spacing:-0.255px;left:1335.00px;">Data: 17/01/2018</span>
<svg style="left:1427.5px;top:988px;" width="7" height="4" viewBox="0 0 7 4"><path d="M0.500 0h6l-3 3.300z" fill="#000"/></svg>
<div style="left:1440px;top:96px;width:4px;height:919px;background:#f5f6f7;"></div>
<div style="left:1444px;top:96px;width:476px;height:919px;background:#fff;"></div>
<div style="left:1444px;top:96px;width:476px;height:18px;background:linear-gradient(#a9c3de,#99b5d5);"></div>
<span id="t131" style="top:97.5px;font-size:12px;line-height:16px;color:#000;white-space:nowrap;letter-spacing:-0.530px;left:1449px;">AR-001 - AR2-001/000005 - [Protezioni]</span>
<svg style="left:1870.5px;top:103px;" width="9" height="5" viewBox="0 0 9 5"><path d="M0 0h9l-4.500 5z" fill="#000"/></svg>
<svg style="left:1888px;top:100px;" width="9" height="12" viewBox="0 0 9 12"><path d="M2.500 0.500h4v5.500h-4zM5.500 0.500v5.500M0.500 6.500h8M4.500 6.500v5" stroke="#000" fill="none"/></svg>
<svg style="left:1904px;top:100px;" width="11" height="11" viewBox="0 0 11 11"><path d="M1 1l9 9M10 1l-9 9" stroke="#000" stroke-width="1.500"/></svg>
<div style="left:1444px;top:114px;width:476px;height:26px;background:#f5f6f7;"></div>
<svg style="left:1447px;top:118px;" width="3" height="18" viewBox="0 0 3 18"><rect x="1" y="1" width="2" height="2" fill="#fff"/><rect x="0" y="0" width="2" height="2" fill="#a6a6a6"/><rect x="1" y="5" width="2" height="2" fill="#fff"/><rect x="0" y="4" width="2" height="2" fill="#a6a6a6"/><rect x="1" y="9" width="2" height="2" fill="#fff"/><rect x="0" y="8" width="2" height="2" fill="#a6a6a6"/><rect x="1" y="13" width="2" height="2" fill="#fff"/><rect x="0" y="12" width="2" height="2" fill="#a6a6a6"/></svg>
<svg style="left:1455.5px;top:118.5px;" width="17.0" height="17.0" viewBox="0 0 17.0 17.0"><circle cx="8.5" cy="8.5" r="7.5" fill="#fff" stroke="#2f6fb5" stroke-width="1.5"/><path d="M13.1875 7.0625h-4.6875v-2.8125l-4.6875 4.25 4.6875 4.25v-2.8125h4.6875z" fill="#2f6fb5"/></svg>
<span id="t132" style="top:119.0px;font-size:12px;line-height:16px;color:#000;white-space:nowrap;letter-spacing:-0.433px;left:1479px;">AR-001:</span>
<div style="left:1524px;top:115px;width:371px;height:23px;background:#fff;"></div>
<div style="left:1879px;top:115px;width:16px;height:23px;background:#f0f0f0;"></div>
<svg style="left:1883.5px;top:125.5px;" width="7" height="4" viewBox="0 0 7 4"><path d="M0.500 0h6l-3 3.300z" fill="#000"/></svg>
<svg style="left:1529px;top:119px;" width="13" height="16" viewBox="0 0 13 16"><path d="M0.500 0.500h8l4 4v11h-12z" fill="#fff" stroke="#666"/><path d="M8.500 0.500v4h4" fill="none" stroke="#666"/><path d="M2.500 4.500h4M2.500 7h8" stroke="#777"/><rect x="2.500" y="9" width="4" height="4.500" fill="#5b9bd5"/><path d="M7.500 9.500h3M7.500 12h3" stroke="#5b9bd5"/></svg>
<span id="t133" style="top:119.0px;font-size:12px;line-height:16px;color:#000;white-space:nowrap;letter-spacing:-0.138px;left:1546px;">Protezioni</span>
<svg style="left:1898.5px;top:118.5px;" width="17.0" height="17.0" viewBox="0 0 17.0 17.0"><circle cx="8.5" cy="8.5" r="7.5" fill="#fff" stroke="#2f6fb5" stroke-width="1.5"/><path d="M3.8125 7.0625h4.6875v-2.8125l4.6875 4.25 -4.6875 4.25v-2.8125h-4.6875z" fill="#2f6fb5"/></svg>
<div style="left:1444px;top:140px;width:476px;height:26px;background:#f5f6f7;"></div>
<svg style="left:1447px;top:144px;" width="3" height="18" viewBox="0 0 3 18"><rect x="1" y="1" width="2" height="2" fill="#fff"/><rect x="0" y="0" width="2" height="2" fill="#a6a6a6"/><rect x="1" y="5" width="2" height="2" fill="#fff"/><rect x="0" y="4" width="2" height="2" fill="#a6a6a6"/><rect x="1" y="9" width="2" height="2" fill="#fff"/><rect x="0" y="8" width="2" height="2" fill="#a6a6a6"/><rect x="1" y="13" width="2" height="2" fill="#fff"/><rect x="0" y="12" width="2" height="2" fill="#a6a6a6"/></svg>
<svg style="left:1455px;top:145px;" width="16" height="16" viewBox="0 0 16 16"><circle cx="8" cy="8" r="8" fill="#4fa882"/><path d="M8 3.500v9M3.500 8h9" stroke="#fff" stroke-width="2.200"/></svg>
<span id="t134" style="top:145.0px;font-size:12px;line-height:16px;color:#000;white-space:nowrap;letter-spacing:0.147px;left:1474px;">Aggiungi immagine...</span>
<svg style="left:1598px;top:146px;" width="14" height="14" viewBox="0 0 14 14"><path d="M1.500 1.500l11 11M12.500 1.500l-11 11" stroke="#d9482b" stroke-width="3.200"/></svg>
<span id="t135" style="top:145.0px;font-size:12px;line-height:16px;color:#000;white-space:nowrap;letter-spacing:-0.126px;left:1616px;">Rimuovi selezionata</span>
<div style="left:1444px;top:166px;width:476px;height:24px;background:#f0f0f0;"></div>
<div style="left:1444px;top:190px;width:476px;height:1px;background:#8c8c8c;"></div>
<div style="left:1444px;top:167px;width:95px;height:24px;background:#fff;border:1px solid #d0d0d0;border-bottom:none;box-sizing:border-box;"></div>
<div style="left:1539px;top:168px;width:115px;height:1px;background:#dcdcdc;"></div>
<span id="t136" style="top:170.5px;font-size:12px;line-height:16px;color:#000;white-space:nowrap;letter-spacing:-0.003px;left:1450px;">Campo corrente</span>
<span id="t137" style="top:172.0px;font-size:12px;line-height:16px;color:#000;white-space:nowrap;letter-spacing:0.207px;left:1547px;">Tutto il documento</span>
<svg style="left:1516px;top:191px;" width="8" height="4" viewBox="0 0 8 4"><path d="M0.500 3.800l3.500-3.300 3.500 3.300" fill="none" stroke="#666" stroke-width="1"/></svg>
<span id="t138" style="top:195.5px;font-size:12px;line-height:16px;color:#000;white-space:nowrap;letter-spacing:0.058px;left:1450px;">Riferimento</span>
<div style="left:1593px;top:191px;width:1px;height:25px;background:#e2e2e2;"></div>
<div style="left:1659px;top:191px;width:1px;height:25px;background:#e2e2e2;"></div>
<div style="left:1675px;top:191px;width:1px;height:25px;background:#e2e2e2;"></div>
<span id="t139" style="top:195.5px;font-size:12px;line-height:16px;color:#000;white-space:nowrap;letter-spacing:-0.103px;left:1600px;">Antepri...</span>
<div style="left:1665px;top:196px;width:9px;height:16px;background:#fff;overflow:hidden;"></div>
<span id="t140" style="top:195.5px;font-size:12px;line-height:16px;color:#000;white-space:nowrap;left:1665px;">(</span>
<span id="t141" style="top:195.5px;font-size:12px;line-height:16px;color:#000;white-space:nowrap;letter-spacing:-0.236px;left:1682px;">Didascalia</span>
<span id="t142" style="top:217.5px;font-size:12px;line-height:16px;color:#2a3fa0;white-space:nowrap;letter-spacing:-0.136px;left:1456px;">1.1 - AR-001 - Protezioni</span>
<div style="left:1588px;top:225px;width:307px;height:1px;background:#cdd5ea;"></div>
<svg style="left:1903px;top:222px;" width="9" height="7" viewBox="0 0 9 7"><path d="M1 5.500l3.500-4 3.500 4" fill="none" stroke="#1a2a7a" stroke-width="1.800"/></svg>
<div style="left:1444px;top:305px;width:476px;height:67px;background:#e6e6fa;"></div>
<div style="left:1595px;top:306px;width:65px;height:65px;background:#fff;"></div>
<svg style="left:1595px;top:249px;" width="65" height="43" viewBox="0 0 150 98"><use href="#img1"/></svg>
<svg style="left:1595px;top:317px;" width="65" height="43" viewBox="0 0 150 98"><use href="#img2"/></svg>
<span id="t143" style="top:262.5px;font-size:12px;line-height:16px;color:#000;white-space:nowrap;letter-spacing:-0.136px;left:1450px;">1.1 - AR-001 - Protezioni</span>
<span id="t144" style="top:262.5px;font-size:12px;line-height:16px;color:#000;white-space:nowrap;left:1663px;">1</span>
<span id="t145" style="top:262.5px;font-size:12px;line-height:16px;color:#000;white-space:nowrap;letter-spacing:-0.132px;left:1679px;">Fig. 1: Immagine 1</span>
<span id="t146" style="top:330.5px;font-size:12px;line-height:16px;color:#000;white-space:nowrap;letter-spacing:-0.136px;left:1450px;">1.1 - AR-001 - Protezioni</span>
<span id="t147" style="top:330.5px;font-size:12px;line-height:16px;color:#000;white-space:nowrap;left:1663px;">2</span>
<span id="t148" style="top:330.5px;font-size:12px;line-height:16px;color:#000;white-space:nowrap;letter-spacing:-0.132px;left:1679px;">Fig. 2: Immagine 2</span>
<div style="left:1444px;top:589px;width:476px;height:8px;background:#f0f0f0;"></div>
<div style="left:1444px;top:597px;width:476px;height:24px;background:#f0f0f0;"></div>
<div style="left:1444px;top:621px;width:476px;height:1px;background:#7d8a8a;"></div>
<div style="left:1444px;top:595px;width:66px;height:27px;background:#fff;border:1px solid #d0d0d0;border-bottom:none;box-sizing:border-box;"></div>
<div style="left:1511px;top:595px;width:72px;height:1px;background:#dcdcdc;"></div>
<span id="t149" style="top:600.0px;font-size:12px;line-height:16px;color:#000;white-space:nowrap;letter-spacing:0.033px;left:1450px;">Anteprima</span>
<span id="t150" style="top:600.5px;font-size:12px;line-height:16px;color:#000;white-space:nowrap;letter-spacing:-0.003px;left:1517px;">Formato A4</span>
<div style="left:1444px;top:622px;width:476px;height:368px;background:#f0f0f0;"></div>
<div style="left:1448px;top:625px;width:451px;height:344px;background:#fff;"></div>
<div style="left:1448px;top:709px;width:451px;height:260px;overflow:hidden;"><svg style="left:0;top:0" width="451" height="295" viewBox="0 0 150 98" preserveAspectRatio="none"><use href="#img2"/></svg></div>
<div style="left:1899px;top:625px;width:17px;height:344px;background:#f0f0f0;"></div>
<div style="left:1900px;top:642px;width:15px;height:215px;background:#cdcdcd;"></div>
<svg style="left:1903px;top:630px;" width="9" height="7" viewBox="0 0 9 7"><path d="M0.800 5.500l3.700-4 3.700 4" fill="none" stroke="#404040" stroke-width="2"/></svg>
<svg style="left:1903px;top:959px;" width="9" height="7" viewBox="0 0 9 7"><path d="M0.800 1l3.700 4 3.700-4" fill="none" stroke="#404040" stroke-width="2"/></svg>
<div style="left:1448px;top:970px;width:451px;height:17px;background:#f0f0f0;"></div>
<div style="left:1465px;top:971px;width:376px;height:15px;background:#cdcdcd;"></div>
<svg style="left:1453px;top:974px;" width="7" height="9" viewBox="0 0 7 9"><path d="M5.500 0.500l-4 4 4 4" fill="none" stroke="#404040" stroke-width="2"/></svg>
<svg style="left:1887px;top:974px;" width="7" height="9" viewBox="0 0 7 9"><path d="M1 0.500l4 4-4 4" fill="none" stroke="#404040" stroke-width="2"/></svg>
<div style="left:1444px;top:990px;width:476px;height:25px;background:#f5f6f7;"></div>
<svg style="left:1447px;top:994px;" width="3" height="18" viewBox="0 0 3 18"><rect x="1" y="1" width="2" height="2" fill="#fff"/><rect x="0" y="0" width="2" height="2" fill="#a6a6a6"/><rect x="1" y="5" width="2" height="2" fill="#fff"/><rect x="0" y="4" width="2" height="2" fill="#a6a6a6"/><rect x="1" y="9" width="2" height="2" fill="#fff"/><rect x="0" y="8" width="2" height="2" fill="#a6a6a6"/><rect x="1" y="13" width="2" height="2" fill="#fff"/><rect x="0" y="12" width="2" height="2" fill="#a6a6a6"/></svg>
<span id="t151" style="top:994.0px;font-size:12px;line-height:16px;color:#000;white-space:nowrap;letter-spacing:-0.337px;left:1456px;">Didascalia:</span>
<div style="left:1517px;top:991px;width:393px;height:23px;background:#fff;"></div>
<span id="t152" style="top:994.0px;font-size:12px;line-height:16px;color:#000;white-space:nowrap;letter-spacing:-0.132px;left:1520px;">Fig. 2: Immagine 2</span>
</body></html>
